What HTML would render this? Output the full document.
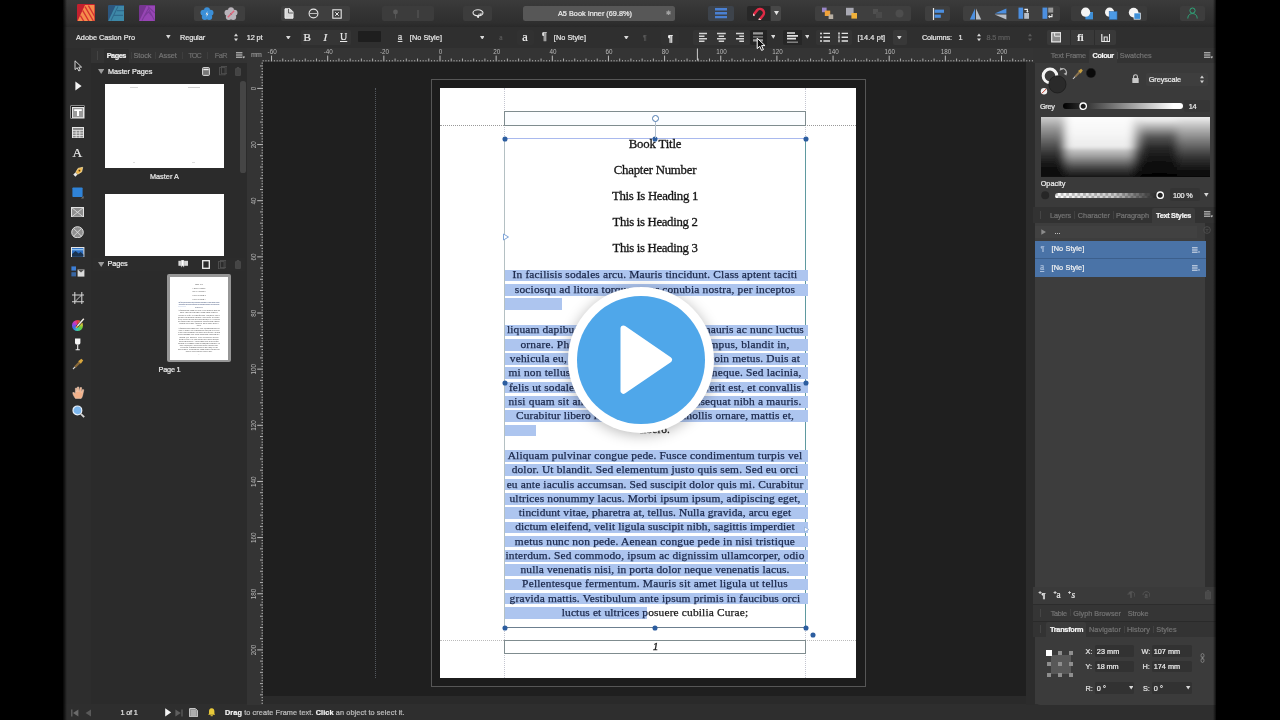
<!DOCTYPE html><html><head><meta charset="utf-8"><title>A5 Book Inner</title><style>
*{box-sizing:border-box;margin:0;padding:0}
html,body{width:1280px;height:720px;overflow:hidden;background:#000}
body{position:relative;font-family:"Liberation Sans",sans-serif;color:#e4e4e4;font-size:8px;-webkit-font-smoothing:antialiased}
.a{position:absolute}
.t{position:absolute;white-space:nowrap;line-height:1;-webkit-text-stroke:.22px currentColor}
.dim{color:#7d7d7d}
.doc{font-family:"Liberation Serif",serif;color:#1a1a1a}
.hl{position:absolute;background:#adc5ef;height:11.7px}
.ln{position:absolute;white-space:nowrap;line-height:1;font-family:"Liberation Serif",serif;font-size:11.2px;text-align:center;left:505px;width:300px;color:#1a2749;-webkit-text-stroke:.25px currentColor}
.hd{position:absolute;white-space:nowrap;line-height:1;font-family:"Liberation Serif",serif;font-size:12.6px;text-align:center;left:505px;width:300px;color:#161616;-webkit-text-stroke:.3px currentColor}
.hand{position:absolute;width:6px;height:6px;border-radius:50%;background:#2c5d9f;transform:scale(.85)}
</style></head><body><div id="root" style="position:absolute;left:0;top:0;width:1280px;height:720px;will-change:transform">
<div class="a" style="left:60.5px;top:0;width:1155.5px;height:720px;background:#2d2d2d"></div>
<div class="a" style="left:60.5px;top:0;width:1155.5px;height:27.5px;background:linear-gradient(#3b3b3b,#343434 40%,#2f2f2f 80%,#272727)"></div>
<div class="a" style="left:60.5px;top:27px;width:1155.5px;height:21px;background:#2f2f2f"></div>
<div class="a" style="left:263.2px;top:61.5px;width:770px;height:635px;background:#1f1f1f"></div>
<div class="a" style="left:247px;top:48px;width:786px;height:14px;background:#333"></div>
<div class="a" style="left:247px;top:62px;width:16px;height:635px;background:#333"></div>
<div class="a" style="left:263px;top:696px;width:770px;height:9px;background:#2a2a2a"></div>
<div class="a" style="left:60.5px;top:704px;width:1155.5px;height:16px;background:#2e2e2e"></div>
<div class="a" style="left:1033px;top:48px;width:183px;height:656px;background:#363636"></div>
<div class="a" style="left:431px;top:79px;width:434.5px;height:608px;border:1.6px solid #565656;background:#1c1c1c"></div>
<div class="a" style="left:440px;top:88px;width:416px;height:590px;background:#fff"></div>
<div class="a" style="left:375px;top:88px;width:0;height:590px;border-left:1px dotted #54585e"></div>
<div class="a" style="left:504px;top:88px;width:0;height:590px;border-left:1px dotted #c4c6d0"></div>
<div class="a" style="left:805px;top:88px;width:0;height:590px;border-left:1px dotted #c4c6d0"></div>
<div class="a" style="left:440px;top:125px;width:416px;height:0;border-top:1px dotted #999"></div>
<div class="a" style="left:440px;top:640px;width:416px;height:0;border-top:1px dotted #bbb"></div>
<div class="a" style="left:504px;top:111px;width:302px;height:15px;border:1px solid #7f8c8f;background:#fbfdff"></div>
<div class="a" style="left:504px;top:640px;width:302px;height:14px;border:1px solid #7f8c8f;background:#fff"></div>
<div class="t doc" style="left:652.8px;top:641.2px;font-size:11.4px;font-style:italic;-webkit-text-stroke:.3px #1a1a1a">1</div>
<div class="a" style="left:504px;top:138px;width:302px;height:490px;border:1px solid #5f9aa0;border-left-color:#b4c0c3;border-top-color:#a9b9ee;border-bottom-color:#6c7f8f"></div>
<div class="hd" style="top:137.8px;font-size:12.8px;letter-spacing:-0.192px">Book Title</div>
<div class="hd" style="top:164.1px;font-size:12.8px;letter-spacing:-0.226px">Chapter Number</div>
<div class="hd" style="top:190.3px;font-size:12.8px;letter-spacing:-0.316px">This Is Heading 1</div>
<div class="hd" style="top:215.9px;font-size:12.8px;letter-spacing:-0.333px">This is Heading 2</div>
<div class="hd" style="top:242.1px;font-size:12.8px;letter-spacing:-0.333px">This is Heading 3</div>
<div class="hl" style="left:505.2px;top:269.6px;width:303.0px"></div>
<div class="hl" style="left:505.2px;top:283.9px;width:303.0px"></div>
<div class="hl" style="left:505.2px;top:298.1px;width:57.3px"></div>
<div class="ln" style="top:269.4px;font-size:11.4px;letter-spacing:0.159px;">In facilisis sodales arcu. Mauris tincidunt. Class aptent taciti</div>
<div class="ln" style="top:283.7px;font-size:11.4px;letter-spacing:0.185px;">sociosqu ad litora torquent per conubia nostra, per inceptos</div>
<div class="ln" style="top:298.0px;font-size:11.4px;letter-spacing:-0.414px;color:#1a1a1a;">hymenaeos.</div>
<div class="hl" style="left:505.2px;top:324.6px;width:303.0px"></div>
<div class="hl" style="left:505.2px;top:338.9px;width:303.0px"></div>
<div class="hl" style="left:505.2px;top:353.1px;width:303.0px"></div>
<div class="hl" style="left:505.2px;top:367.4px;width:303.0px"></div>
<div class="hl" style="left:505.2px;top:381.7px;width:303.0px"></div>
<div class="hl" style="left:505.2px;top:396.0px;width:303.0px"></div>
<div class="hl" style="left:505.2px;top:410.2px;width:303.0px"></div>
<div class="hl" style="left:505.2px;top:424.5px;width:30.8px"></div>
<div class="ln" style="top:324.4px;font-size:11.4px;letter-spacing:0.156px;text-align:left;left:506.9px;">liquam dapibus ipsum vitae sem. Ut eget mauris ac nunc luctus</div>
<div class="ln" style="top:338.7px;font-size:11.4px;letter-spacing:0.201px;">ornare. Phasellus enim augue, rutrum tempus, blandit in,</div>
<div class="ln" style="top:353.0px;font-size:11.4px;letter-spacing:0.173px;">vehicula eu, neque. Sed consequat nunc. Proin metus. Duis at</div>
<div class="ln" style="top:367.3px;font-size:11.4px;letter-spacing:0.196px;">mi non tellus malesuada tincidunt. Cras in neque. Sed lacinia,</div>
<div class="ln" style="top:381.5px;font-size:11.4px;letter-spacing:0.138px;">felis ut sodales pretium, justo sapien hendrerit est, et convallis</div>
<div class="ln" style="top:395.8px;font-size:11.4px;letter-spacing:0.204px;">nisi quam sit amet erat. Suspendisse consequat nibh a mauris.</div>
<div class="ln" style="top:410.1px;font-size:11.4px;letter-spacing:0.114px;">Curabitur libero ligula, faucibus at, mollis ornare, mattis et,</div>
<div class="ln" style="top:424.3px;font-size:11.4px;letter-spacing:0.080px;color:#1a1a1a;">libero.</div>
<div class="hl" style="left:505.2px;top:450.1px;width:303.0px"></div>
<div class="hl" style="left:505.2px;top:464.4px;width:303.0px"></div>
<div class="hl" style="left:505.2px;top:478.6px;width:303.0px"></div>
<div class="hl" style="left:505.2px;top:492.9px;width:303.0px"></div>
<div class="hl" style="left:505.2px;top:507.2px;width:303.0px"></div>
<div class="hl" style="left:505.2px;top:521.5px;width:303.0px"></div>
<div class="hl" style="left:505.2px;top:535.7px;width:303.0px"></div>
<div class="hl" style="left:505.2px;top:550.0px;width:303.0px"></div>
<div class="hl" style="left:505.2px;top:564.3px;width:303.0px"></div>
<div class="hl" style="left:505.2px;top:578.5px;width:303.0px"></div>
<div class="hl" style="left:505.2px;top:592.8px;width:303.0px"></div>
<div class="hl" style="left:505.2px;top:607.1px;width:141.8px"></div>
<div class="ln" style="top:449.9px;font-size:11.4px;letter-spacing:0.184px;">Aliquam pulvinar congue pede. Fusce condimentum turpis vel</div>
<div class="ln" style="top:464.2px;font-size:11.4px;letter-spacing:0.176px;">dolor. Ut blandit. Sed elementum justo quis sem. Sed eu orci</div>
<div class="ln" style="top:478.5px;font-size:11.4px;letter-spacing:0.166px;">eu ante iaculis accumsan. Sed suscipit dolor quis mi. Curabitur</div>
<div class="ln" style="top:492.8px;font-size:11.4px;letter-spacing:0.161px;">ultrices nonummy lacus. Morbi ipsum ipsum, adipiscing eget,</div>
<div class="ln" style="top:507.0px;font-size:11.4px;letter-spacing:0.118px;">tincidunt vitae, pharetra at, tellus. Nulla gravida, arcu eget</div>
<div class="ln" style="top:521.3px;font-size:11.4px;letter-spacing:0.137px;">dictum eleifend, velit ligula suscipit nibh, sagittis imperdiet</div>
<div class="ln" style="top:535.6px;font-size:11.4px;letter-spacing:0.222px;">metus nunc non pede. Aenean congue pede in nisi tristique</div>
<div class="ln" style="top:549.8px;font-size:11.4px;letter-spacing:0.165px;">interdum. Sed commodo, ipsum ac dignissim ullamcorper, odio</div>
<div class="ln" style="top:564.1px;font-size:11.4px;letter-spacing:0.143px;">nulla venenatis nisi, in porta dolor neque venenatis lacus.</div>
<div class="ln" style="top:578.4px;font-size:11.4px;letter-spacing:0.193px;">Pellentesque fermentum. Mauris sit amet ligula ut tellus</div>
<div class="ln" style="top:592.6px;font-size:11.4px;letter-spacing:0.170px;">gravida mattis. Vestibulum ante ipsum primis in faucibus orci</div>
<div class="ln" style="top:606.9px;font-size:11.4px;letter-spacing:0.160px;">luctus et ultrices p<span style="color:#1a1a1a">osuere cubilia Curae;</span></div>
<div class="hand" style="left:501.5px;top:135.5px"></div>
<div class="hand" style="left:652.0px;top:135.5px"></div>
<div class="hand" style="left:802.5px;top:135.5px"></div>
<div class="hand" style="left:501.5px;top:380.0px"></div>
<div class="hand" style="left:802.5px;top:380.0px"></div>
<div class="hand" style="left:501.5px;top:624.5px"></div>
<div class="hand" style="left:652.0px;top:624.5px"></div>
<div class="hand" style="left:802.5px;top:624.5px"></div>
<div class="hand" style="left:809.5px;top:631.5px"></div>
<div class="a" style="left:655px;top:121px;width:0;height:17px;border-left:1px solid #b4c0cc"></div>
<div class="a" style="left:651.5px;top:114.5px;width:7px;height:7px;border-radius:50%;border:1px solid #4d7ab0;background:#fff"></div>
<svg class="a" style="left:501.5px;top:233px" width="8" height="8" viewBox="0 0 8 8"><path d="M1.5 1 L6.5 4 L1.5 7 Z" fill="#fff" stroke="#7fa5d8" stroke-width="1"/></svg>
<svg class="a" style="left:802.6px;top:525.6px" width="7" height="7" viewBox="0 0 7 7"><path d="M1.5 1 L5.8 3.5 L1.5 6 Z" fill="#fff" stroke="#8fb0dc" stroke-width=".8"/></svg>
<div class="a" style="left:567.5px;top:287px;width:146px;height:146px;border-radius:50%;background:#fff;box-shadow:0 2px 14px rgba(0,0,0,.28)"></div>
<div class="a" style="left:577px;top:296px;width:127.5px;height:127.5px;border-radius:50%;background:#4fa7ea"></div>
<svg class="a" style="left:612px;top:318px" width="70" height="84" viewBox="0 0 70 84"><path d="M11.5 10.5 L57 41.7 L11.5 72.9 Z" fill="#fff" stroke="#fff" stroke-width="6" stroke-linejoin="round"/></svg>
<div class="a" style="left:60.5px;top:48.0px;width:30.5px;height:656.0px;background:#2d2d2d;"></div>
<div class="a" style="left:91.0px;top:48.0px;width:157.0px;height:656.0px;background:#2b2b2b;"></div>
<div class="a" style="left:91.0px;top:48.0px;width:156.0px;height:14.5px;background:#333333;"></div>
<div class="a" style="left:96.5px;top:51.0px;width:0.8px;height:9.0px;background:#444;"></div>
<div class="a" style="left:103.8px;top:48.5px;width:25.4px;height:14.0px;background:#2e2e2e;border-radius:2px 2px 0 0"></div>
<div class="t" style="left:106.7px;top:51.82px;font-size:7.30px;color:#f4f4f4;letter-spacing:-0.441px;font-weight:bold;">Pages</div>
<div class="t" style="left:133.5px;top:51.82px;font-size:7.30px;color:#747474;letter-spacing:-0.071px;">Stock</div>
<div class="t" style="left:158.8px;top:51.82px;font-size:7.30px;color:#747474;letter-spacing:-0.071px;">Asset</div>
<div class="t" style="left:188.4px;top:51.82px;font-size:7.30px;color:#6c6c6c;letter-spacing:-0.892px;">TOC</div>
<div class="t" style="left:214.7px;top:51.82px;font-size:7.30px;color:#6c6c6c;letter-spacing:-0.497px;">FaR</div>
<div class="a" style="left:130.8px;top:52.0px;width:0.7px;height:7.0px;background:#3e3e3e;"></div>
<div class="a" style="left:155.2px;top:52.0px;width:0.7px;height:7.0px;background:#3e3e3e;"></div>
<div class="a" style="left:181.5px;top:52.0px;width:0.7px;height:7.0px;background:#3e3e3e;"></div>
<div class="a" style="left:207.0px;top:52.0px;width:0.7px;height:7.0px;background:#3e3e3e;"></div>
<svg class="a" style="left:236.00px;top:52.20px;" width="9" height="7" viewBox="0 0 9 7"><path d="M0 .8 H6.4 M0 3 H6.4 M0 5.2 H6.4" stroke="#d8d8d8" stroke-width="1"/><path d="M6.6 4.6 H9 L7.8 6.4 Z" fill="#d8d8d8"/></svg>
<div class="a" style="left:93.0px;top:64.0px;width:152.0px;height:14.5px;background:#2b2b2b;"></div>
<svg class="a" style="left:97.60px;top:68.60px;" width="6.4" height="5" viewBox="0 0 6.4 5"><path d="M0 0 H6.4 L3.2 5 Z" fill="#9b9b9b"/></svg>
<div class="t" style="left:108.0px;top:68.02px;font-size:7.30px;color:#ececec;letter-spacing:-0.053px;">Master Pages</div>
<svg class="a" style="left:202.00px;top:66.80px;" width="8" height="9" viewBox="0 0 8 9"><rect x=".6" y=".6" width="6.8" height="7.8" rx=".8" fill="#777" stroke="#dcdcdc" stroke-width="1"/><path d="M1.4 2.6 H6.6" stroke="#eee" stroke-width="1.2"/></svg>
<svg class="a" style="left:218.50px;top:66.40px;" width="8.6" height="9.4" viewBox="0 0 8.6 9.4"><rect x=".5" y="1.6" width="5.6" height="7.2" fill="none" stroke="#505050" stroke-width=".9"/><rect x="2.4" y=".5" width="5.6" height="7.2" fill="none" stroke="#505050" stroke-width=".9"/></svg>
<svg class="a" style="left:234.60px;top:66.60px;" width="6" height="9" viewBox="0 0 6 9"><path d="M.6 1.6 H5.4 V8.4 H.6 Z M1.8 .5 H4.2" fill="#444" stroke="#4c4c4c" stroke-width=".9"/></svg>
<div class="a" style="left:105.3px;top:83.5px;width:118.5px;height:84.0px;background:#ffffff;"></div>
<div class="a" style="left:129.5px;top:87.4px;width:8.0px;height:0.8px;background:#d8d8d8;"></div>
<div class="a" style="left:188.0px;top:87.4px;width:12.0px;height:0.8px;background:#d0d0d0;"></div>
<div class="a" style="left:132.5px;top:161.6px;width:2.0px;height:0.8px;background:#ddd;"></div>
<div class="a" style="left:192.0px;top:161.6px;width:3.0px;height:0.8px;background:#ddd;"></div>
<div class="t" style="left:149.9px;top:173.42px;font-size:7.30px;color:#e8e8e8;letter-spacing:0.037px;">Master A</div>
<div class="a" style="left:105.3px;top:193.7px;width:118.5px;height:62.5px;background:#ffffff;"></div>
<div class="a" style="left:240.4px;top:81.0px;width:5.2px;height:91.5px;background:#454545;border-radius:2.6px"></div>
<div class="a" style="left:93.0px;top:257.5px;width:152.0px;height:13.5px;background:#2c2c2c;"></div>
<svg class="a" style="left:97.60px;top:261.60px;" width="6.4" height="5" viewBox="0 0 6.4 5"><path d="M0 0 H6.4 L3.2 5 Z" fill="#9b9b9b"/></svg>
<div class="t" style="left:107.6px;top:260.22px;font-size:7.30px;color:#ececec;letter-spacing:-0.140px;">Pages</div>
<svg class="a" style="left:177.50px;top:260.40px;" width="10.5" height="7.5" viewBox="0 0 10.5 7.5"><rect x=".4" y=".8" width="9.6" height="5" fill="#d8d8d8"/><path d="M3.2 0 V7.2 L4.6 5.8 L6 7.2 V0 Z" fill="#fff" stroke="#888" stroke-width=".4"/></svg>
<svg class="a" style="left:201.60px;top:259.80px;" width="8" height="9" viewBox="0 0 8 9"><rect x=".7" y=".7" width="6.6" height="7.6" fill="#2a2a2a" stroke="#f0f0f0" stroke-width="1.3"/></svg>
<svg class="a" style="left:217.80px;top:259.60px;" width="8.6" height="9.4" viewBox="0 0 8.6 9.4"><rect x=".5" y="1.6" width="5.6" height="7.2" fill="none" stroke="#525252" stroke-width=".9"/><rect x="2.4" y=".5" width="5.6" height="7.2" fill="none" stroke="#525252" stroke-width=".9"/></svg>
<svg class="a" style="left:234.60px;top:260.00px;" width="6" height="9" viewBox="0 0 6 9"><path d="M.6 1.6 H5.4 V8.4 H.6 Z M1.8 .5 H4.2" fill="#454545" stroke="#4c4c4c" stroke-width=".9"/></svg>
<div class="a" style="left:167.0px;top:273.8px;width:64.0px;height:88.4px;background:#969696;border-radius:2px"></div>
<div class="a" style="left:169.6px;top:276.6px;width:58.8px;height:83.4px;background:#ffffff;"></div>
<div class="a" style="left:177.93px;top:282.90px;width:42.15px;text-align:center;white-space:nowrap;overflow:hidden;font-family:'Liberation Serif',serif;font-size:1.91px;line-height:2.05px;height:2.05px;color:#444">Book Title</div>
<div class="a" style="left:177.93px;top:286.60px;width:42.15px;text-align:center;white-space:nowrap;overflow:hidden;font-family:'Liberation Serif',serif;font-size:1.91px;line-height:2.05px;height:2.05px;color:#444">Chapter Number</div>
<div class="a" style="left:177.93px;top:290.30px;width:42.15px;text-align:center;white-space:nowrap;overflow:hidden;font-family:'Liberation Serif',serif;font-size:1.91px;line-height:2.05px;height:2.05px;color:#444">This Is Heading 1</div>
<div class="a" style="left:177.93px;top:294.00px;width:42.15px;text-align:center;white-space:nowrap;overflow:hidden;font-family:'Liberation Serif',serif;font-size:1.91px;line-height:2.05px;height:2.05px;color:#444">This is Heading 2</div>
<div class="a" style="left:177.93px;top:297.70px;width:42.15px;text-align:center;white-space:nowrap;overflow:hidden;font-family:'Liberation Serif',serif;font-size:1.91px;line-height:2.05px;height:2.05px;color:#444">This is Heading 3</div>
<div class="a" style="left:178.0px;top:301.6px;width:42.4px;height:1.7px;background:#e3e9f4;"></div>
<div class="a" style="left:178.0px;top:303.7px;width:42.4px;height:1.7px;background:#e3e9f4;"></div>
<div class="a" style="left:178.0px;top:305.7px;width:8.0px;height:1.7px;background:#e3e9f4;"></div>
<div class="a" style="left:177.93px;top:301.40px;width:42.15px;text-align:center;white-space:nowrap;overflow:hidden;font-family:'Liberation Serif',serif;font-size:1.70px;line-height:2.05px;height:2.05px;color:#4a5570">In facilisis sodales arcu. Mauris tincidunt. Class aptent taciti</div>
<div class="a" style="left:177.93px;top:303.45px;width:42.15px;text-align:center;white-space:nowrap;overflow:hidden;font-family:'Liberation Serif',serif;font-size:1.70px;line-height:2.05px;height:2.05px;color:#4a5570">sociosqu ad litora torquent per conubia nostra, per inceptos</div>
<div class="a" style="left:177.93px;top:305.50px;width:42.15px;text-align:center;white-space:nowrap;overflow:hidden;font-family:'Liberation Serif',serif;font-size:1.70px;line-height:2.05px;height:2.05px;color:#4a5570">hymenaeos.</div>
<div class="a" style="left:177.93px;top:309.40px;width:42.15px;text-align:center;white-space:nowrap;overflow:hidden;font-family:'Liberation Serif',serif;font-size:1.70px;line-height:2.05px;height:2.05px;color:#3a3a3a">Aliquam dapibus ipsum vitae sem. Ut eget mauris ac nunc luctus</div>
<div class="a" style="left:177.93px;top:311.45px;width:42.15px;text-align:center;white-space:nowrap;overflow:hidden;font-family:'Liberation Serif',serif;font-size:1.70px;line-height:2.05px;height:2.05px;color:#3a3a3a">ornare. Phasellus enim augue, rutrum tempus, blandit in,</div>
<div class="a" style="left:177.93px;top:313.50px;width:42.15px;text-align:center;white-space:nowrap;overflow:hidden;font-family:'Liberation Serif',serif;font-size:1.70px;line-height:2.05px;height:2.05px;color:#3a3a3a">vehicula eu, neque. Sed consequat nunc. Proin metus. Duis at</div>
<div class="a" style="left:177.93px;top:315.55px;width:42.15px;text-align:center;white-space:nowrap;overflow:hidden;font-family:'Liberation Serif',serif;font-size:1.70px;line-height:2.05px;height:2.05px;color:#3a3a3a">mi non tellus malesuada tincidunt. Cras in neque. Sed lacinia,</div>
<div class="a" style="left:177.93px;top:317.60px;width:42.15px;text-align:center;white-space:nowrap;overflow:hidden;font-family:'Liberation Serif',serif;font-size:1.70px;line-height:2.05px;height:2.05px;color:#3a3a3a">felis ut sodales pretium, justo sapien hendrerit est, et convallis</div>
<div class="a" style="left:177.93px;top:319.65px;width:42.15px;text-align:center;white-space:nowrap;overflow:hidden;font-family:'Liberation Serif',serif;font-size:1.70px;line-height:2.05px;height:2.05px;color:#3a3a3a">nisi quam sit amet erat. Suspendisse consequat nibh a mauris.</div>
<div class="a" style="left:177.93px;top:321.70px;width:42.15px;text-align:center;white-space:nowrap;overflow:hidden;font-family:'Liberation Serif',serif;font-size:1.70px;line-height:2.05px;height:2.05px;color:#3a3a3a">Curabitur libero ligula, faucibus at, mollis ornare, mattis et,</div>
<div class="a" style="left:177.93px;top:323.75px;width:42.15px;text-align:center;white-space:nowrap;overflow:hidden;font-family:'Liberation Serif',serif;font-size:1.70px;line-height:2.05px;height:2.05px;color:#3a3a3a">libero.</div>
<div class="a" style="left:177.93px;top:327.30px;width:42.15px;text-align:center;white-space:nowrap;overflow:hidden;font-family:'Liberation Serif',serif;font-size:1.70px;line-height:2.05px;height:2.05px;color:#3a3a3a">Aliquam pulvinar congue pede. Fusce condimentum turpis vel</div>
<div class="a" style="left:177.93px;top:329.35px;width:42.15px;text-align:center;white-space:nowrap;overflow:hidden;font-family:'Liberation Serif',serif;font-size:1.70px;line-height:2.05px;height:2.05px;color:#3a3a3a">dolor. Ut blandit. Sed elementum justo quis sem. Sed eu orci</div>
<div class="a" style="left:177.93px;top:331.40px;width:42.15px;text-align:center;white-space:nowrap;overflow:hidden;font-family:'Liberation Serif',serif;font-size:1.70px;line-height:2.05px;height:2.05px;color:#3a3a3a">eu ante iaculis accumsan. Sed suscipit dolor quis mi. Curabitur</div>
<div class="a" style="left:177.93px;top:333.45px;width:42.15px;text-align:center;white-space:nowrap;overflow:hidden;font-family:'Liberation Serif',serif;font-size:1.70px;line-height:2.05px;height:2.05px;color:#3a3a3a">ultrices nonummy lacus. Morbi ipsum ipsum, adipiscing eget,</div>
<div class="a" style="left:177.93px;top:335.50px;width:42.15px;text-align:center;white-space:nowrap;overflow:hidden;font-family:'Liberation Serif',serif;font-size:1.70px;line-height:2.05px;height:2.05px;color:#3a3a3a">tincidunt vitae, pharetra at, tellus. Nulla gravida, arcu eget</div>
<div class="a" style="left:177.93px;top:337.55px;width:42.15px;text-align:center;white-space:nowrap;overflow:hidden;font-family:'Liberation Serif',serif;font-size:1.70px;line-height:2.05px;height:2.05px;color:#3a3a3a">dictum eleifend, velit ligula suscipit nibh, sagittis imperdiet</div>
<div class="a" style="left:177.93px;top:339.60px;width:42.15px;text-align:center;white-space:nowrap;overflow:hidden;font-family:'Liberation Serif',serif;font-size:1.70px;line-height:2.05px;height:2.05px;color:#3a3a3a">metus nunc non pede. Aenean congue pede in nisi tristique</div>
<div class="a" style="left:177.93px;top:341.65px;width:42.15px;text-align:center;white-space:nowrap;overflow:hidden;font-family:'Liberation Serif',serif;font-size:1.70px;line-height:2.05px;height:2.05px;color:#3a3a3a">interdum. Sed commodo, ipsum ac dignissim ullamcorper, odio</div>
<div class="a" style="left:177.93px;top:343.70px;width:42.15px;text-align:center;white-space:nowrap;overflow:hidden;font-family:'Liberation Serif',serif;font-size:1.70px;line-height:2.05px;height:2.05px;color:#3a3a3a">nulla venenatis nisi, in porta dolor neque venenatis lacus.</div>
<div class="a" style="left:177.93px;top:345.75px;width:42.15px;text-align:center;white-space:nowrap;overflow:hidden;font-family:'Liberation Serif',serif;font-size:1.70px;line-height:2.05px;height:2.05px;color:#3a3a3a">Pellentesque fermentum. Mauris sit amet ligula ut tellus</div>
<div class="a" style="left:177.93px;top:347.80px;width:42.15px;text-align:center;white-space:nowrap;overflow:hidden;font-family:'Liberation Serif',serif;font-size:1.70px;line-height:2.05px;height:2.05px;color:#3a3a3a">gravida mattis. Vestibulum ante ipsum primis in faucibus orci</div>
<div class="a" style="left:177.93px;top:349.85px;width:42.15px;text-align:center;white-space:nowrap;overflow:hidden;font-family:'Liberation Serif',serif;font-size:1.70px;line-height:2.05px;height:2.05px;color:#3a3a3a">luctus et ultrices posuere cubilia Curae;</div>
<div class="a" style="left:177.93px;top:353.60px;width:42.15px;text-align:center;white-space:nowrap;overflow:hidden;font-family:'Liberation Serif',serif;font-size:1.64px;line-height:2.05px;height:2.05px;color:#777"><i>1</i></div>
<div class="t" style="left:158.5px;top:365.82px;font-size:7.30px;color:#e8e8e8;letter-spacing:-0.189px;">Page 1</div>
<div class="a" style="left:247.0px;top:48.0px;width:787.5px;height:13.5px;background:#343434;"></div>
<div class="a" style="left:247.0px;top:61.5px;width:16.2px;height:643.0px;background:#343434;"></div>
<svg class="a" style="left:0;top:0" width="1280" height="720" viewBox="0 0 1280 720"><path d="M263.13 60.1V61.4M265.94 60.1V61.4M268.74 60.1V61.4M274.36 60.1V61.4M277.16 60.1V61.4M279.97 60.1V61.4M285.59 60.1V61.4M288.39 60.1V61.4M291.20 60.1V61.4M296.82 60.1V61.4M299.62 60.1V61.4M302.43 60.1V61.4M308.05 60.1V61.4M310.86 60.1V61.4M313.66 60.1V61.4M319.28 60.1V61.4M322.08 60.1V61.4M324.89 60.1V61.4M330.51 60.1V61.4M333.31 60.1V61.4M336.12 60.1V61.4M341.74 60.1V61.4M344.55 60.1V61.4M347.35 60.1V61.4M352.97 60.1V61.4M355.77 60.1V61.4M358.58 60.1V61.4M364.20 60.1V61.4M367.00 60.1V61.4M369.81 60.1V61.4M375.43 60.1V61.4M378.24 60.1V61.4M381.04 60.1V61.4M386.66 60.1V61.4M389.46 60.1V61.4M392.27 60.1V61.4M397.89 60.1V61.4M400.69 60.1V61.4M403.50 60.1V61.4M409.12 60.1V61.4M411.93 60.1V61.4M414.73 60.1V61.4M420.35 60.1V61.4M423.15 60.1V61.4M425.96 60.1V61.4M431.58 60.1V61.4M434.38 60.1V61.4M437.19 60.1V61.4M442.81 60.1V61.4M445.62 60.1V61.4M448.42 60.1V61.4M454.04 60.1V61.4M456.85 60.1V61.4M459.65 60.1V61.4M465.27 60.1V61.4M468.07 60.1V61.4M470.88 60.1V61.4M476.50 60.1V61.4M479.31 60.1V61.4M482.11 60.1V61.4M487.73 60.1V61.4M490.54 60.1V61.4M493.34 60.1V61.4M498.96 60.1V61.4M501.76 60.1V61.4M504.57 60.1V61.4M510.19 60.1V61.4M513.00 60.1V61.4M515.80 60.1V61.4M521.42 60.1V61.4M524.23 60.1V61.4M527.03 60.1V61.4M532.65 60.1V61.4M535.46 60.1V61.4M538.26 60.1V61.4M543.88 60.1V61.4M546.68 60.1V61.4M549.49 60.1V61.4M555.11 60.1V61.4M557.91 60.1V61.4M560.72 60.1V61.4M566.34 60.1V61.4M569.14 60.1V61.4M571.95 60.1V61.4M577.57 60.1V61.4M580.38 60.1V61.4M583.18 60.1V61.4M588.80 60.1V61.4M591.61 60.1V61.4M594.41 60.1V61.4M600.03 60.1V61.4M602.84 60.1V61.4M605.64 60.1V61.4M611.26 60.1V61.4M614.07 60.1V61.4M616.87 60.1V61.4M622.49 60.1V61.4M625.30 60.1V61.4M628.10 60.1V61.4M633.72 60.1V61.4M636.52 60.1V61.4M639.33 60.1V61.4M644.95 60.1V61.4M647.75 60.1V61.4M650.56 60.1V61.4M656.18 60.1V61.4M658.99 60.1V61.4M661.79 60.1V61.4M667.41 60.1V61.4M670.22 60.1V61.4M673.02 60.1V61.4M678.64 60.1V61.4M681.45 60.1V61.4M684.25 60.1V61.4M689.87 60.1V61.4M692.67 60.1V61.4M695.48 60.1V61.4M701.10 60.1V61.4M703.90 60.1V61.4M706.71 60.1V61.4M712.33 60.1V61.4M715.13 60.1V61.4M717.94 60.1V61.4M723.56 60.1V61.4M726.37 60.1V61.4M729.17 60.1V61.4M734.79 60.1V61.4M737.60 60.1V61.4M740.40 60.1V61.4M746.02 60.1V61.4M748.83 60.1V61.4M751.63 60.1V61.4M757.25 60.1V61.4M760.06 60.1V61.4M762.86 60.1V61.4M768.48 60.1V61.4M771.29 60.1V61.4M774.09 60.1V61.4M779.71 60.1V61.4M782.51 60.1V61.4M785.32 60.1V61.4M790.94 60.1V61.4M793.75 60.1V61.4M796.55 60.1V61.4M802.17 60.1V61.4M804.98 60.1V61.4M807.78 60.1V61.4M813.40 60.1V61.4M816.21 60.1V61.4M819.01 60.1V61.4M824.63 60.1V61.4M827.43 60.1V61.4M830.24 60.1V61.4M835.86 60.1V61.4M838.66 60.1V61.4M841.47 60.1V61.4M847.09 60.1V61.4M849.89 60.1V61.4M852.70 60.1V61.4M858.32 60.1V61.4M861.12 60.1V61.4M863.93 60.1V61.4M869.55 60.1V61.4M872.36 60.1V61.4M875.16 60.1V61.4M880.78 60.1V61.4M883.59 60.1V61.4M886.39 60.1V61.4M892.01 60.1V61.4M894.82 60.1V61.4M897.62 60.1V61.4M903.24 60.1V61.4M906.05 60.1V61.4M908.85 60.1V61.4M914.47 60.1V61.4M917.28 60.1V61.4M920.08 60.1V61.4M925.70 60.1V61.4M928.50 60.1V61.4M931.31 60.1V61.4M936.93 60.1V61.4M939.74 60.1V61.4M942.54 60.1V61.4M948.16 60.1V61.4M950.97 60.1V61.4M953.77 60.1V61.4M959.39 60.1V61.4M962.20 60.1V61.4M965.00 60.1V61.4M970.62 60.1V61.4M973.43 60.1V61.4M976.23 60.1V61.4M981.85 60.1V61.4M984.65 60.1V61.4M987.46 60.1V61.4M993.08 60.1V61.4M995.88 60.1V61.4M998.69 60.1V61.4M1004.31 60.1V61.4M1007.12 60.1V61.4M1009.92 60.1V61.4M1015.54 60.1V61.4M1018.35 60.1V61.4M1021.15 60.1V61.4M1026.77 60.1V61.4M1029.58 60.1V61.4M1032.38 60.1V61.4" stroke="#c0c0c0" stroke-width="0.85"/><path d="" stroke="#c8c8c8" stroke-width="0.85"/><path d="M282.78 58.5V61.4M294.01 58.5V61.4M305.24 58.5V61.4M316.47 58.5V61.4M338.93 58.5V61.4M350.16 58.5V61.4M361.39 58.5V61.4M372.62 58.5V61.4M395.08 58.5V61.4M406.31 58.5V61.4M417.54 58.5V61.4M428.77 58.5V61.4M451.23 58.5V61.4M462.46 58.5V61.4M473.69 58.5V61.4M484.92 58.5V61.4M507.38 58.5V61.4M518.61 58.5V61.4M529.84 58.5V61.4M541.07 58.5V61.4M563.53 58.5V61.4M574.76 58.5V61.4M585.99 58.5V61.4M597.22 58.5V61.4M619.68 58.5V61.4M630.91 58.5V61.4M642.14 58.5V61.4M653.37 58.5V61.4M675.83 58.5V61.4M687.06 58.5V61.4M698.29 58.5V61.4M709.52 58.5V61.4M731.98 58.5V61.4M743.21 58.5V61.4M754.44 58.5V61.4M765.67 58.5V61.4M788.13 58.5V61.4M799.36 58.5V61.4M810.59 58.5V61.4M821.82 58.5V61.4M844.28 58.5V61.4M855.51 58.5V61.4M866.74 58.5V61.4M877.97 58.5V61.4M900.43 58.5V61.4M911.66 58.5V61.4M922.89 58.5V61.4M934.12 58.5V61.4M956.58 58.5V61.4M967.81 58.5V61.4M979.04 58.5V61.4M990.27 58.5V61.4M1012.73 58.5V61.4M1023.96 58.5V61.4" stroke="#c0c0c0" stroke-width="0.85"/><path d="M271.55 55.6V61.4M327.70 55.6V61.4M383.85 55.6V61.4M440.00 55.6V61.4M496.15 55.6V61.4M552.30 55.6V61.4M608.45 55.6V61.4M664.60 55.6V61.4M720.75 55.6V61.4M776.90 55.6V61.4M833.05 55.6V61.4M889.20 55.6V61.4M945.35 55.6V61.4M1001.50 55.6V61.4" stroke="#d4d4d4" stroke-width="0.85"/><path d="M261.5 63.13H263M261.5 68.75H263M261.5 71.56H263M261.5 74.36H263M261.5 79.98H263M261.5 82.79H263M261.5 85.59H263M261.5 91.21H263M261.5 94.02H263M261.5 96.82H263M261.5 102.44H263M261.5 105.25H263M261.5 108.05H263M261.5 113.67H263M261.5 116.48H263M261.5 119.28H263M261.5 124.90H263M261.5 127.71H263M261.5 130.51H263M261.5 136.13H263M261.5 138.94H263M261.5 141.74H263M261.5 147.36H263M261.5 150.17H263M261.5 152.97H263M261.5 158.59H263M261.5 161.40H263M261.5 164.20H263M261.5 169.82H263M261.5 172.62H263M261.5 175.43H263M261.5 181.05H263M261.5 183.86H263M261.5 186.66H263M261.5 192.28H263M261.5 195.09H263M261.5 197.89H263M261.5 203.51H263M261.5 206.31H263M261.5 209.12H263M261.5 214.74H263M261.5 217.55H263M261.5 220.35H263M261.5 225.97H263M261.5 228.78H263M261.5 231.58H263M261.5 237.20H263M261.5 240.01H263M261.5 242.81H263M261.5 248.43H263M261.5 251.24H263M261.5 254.04H263M261.5 259.66H263M261.5 262.47H263M261.5 265.27H263M261.5 270.89H263M261.5 273.70H263M261.5 276.50H263M261.5 282.12H263M261.5 284.93H263M261.5 287.73H263M261.5 293.35H263M261.5 296.15H263M261.5 298.96H263M261.5 304.58H263M261.5 307.38H263M261.5 310.19H263M261.5 315.81H263M261.5 318.62H263M261.5 321.42H263M261.5 327.04H263M261.5 329.85H263M261.5 332.65H263M261.5 338.27H263M261.5 341.08H263M261.5 343.88H263M261.5 349.50H263M261.5 352.31H263M261.5 355.11H263M261.5 360.73H263M261.5 363.53H263M261.5 366.34H263M261.5 371.96H263M261.5 374.76H263M261.5 377.57H263M261.5 383.19H263M261.5 386.00H263M261.5 388.80H263M261.5 394.42H263M261.5 397.23H263M261.5 400.03H263M261.5 405.65H263M261.5 408.46H263M261.5 411.26H263M261.5 416.88H263M261.5 419.69H263M261.5 422.49H263M261.5 428.11H263M261.5 430.91H263M261.5 433.72H263M261.5 439.34H263M261.5 442.14H263M261.5 444.95H263M261.5 450.57H263M261.5 453.38H263M261.5 456.18H263M261.5 461.80H263M261.5 464.61H263M261.5 467.41H263M261.5 473.03H263M261.5 475.84H263M261.5 478.64H263M261.5 484.26H263M261.5 487.07H263M261.5 489.87H263M261.5 495.49H263M261.5 498.30H263M261.5 501.10H263M261.5 506.72H263M261.5 509.52H263M261.5 512.33H263M261.5 517.95H263M261.5 520.75H263M261.5 523.56H263M261.5 529.18H263M261.5 531.99H263M261.5 534.79H263M261.5 540.41H263M261.5 543.22H263M261.5 546.02H263M261.5 551.64H263M261.5 554.45H263M261.5 557.25H263M261.5 562.87H263M261.5 565.68H263M261.5 568.48H263M261.5 574.10H263M261.5 576.90H263M261.5 579.71H263M261.5 585.33H263M261.5 588.13H263M261.5 590.94H263M261.5 596.56H263M261.5 599.37H263M261.5 602.17H263M261.5 607.79H263M261.5 610.60H263M261.5 613.40H263M261.5 619.02H263M261.5 621.83H263M261.5 624.63H263M261.5 630.25H263M261.5 633.05H263M261.5 635.86H263M261.5 641.48H263M261.5 644.28H263M261.5 647.09H263M261.5 652.71H263M261.5 655.51H263M261.5 658.32H263M261.5 663.94H263M261.5 666.75H263M261.5 669.55H263M261.5 675.17H263M261.5 677.98H263M261.5 680.78H263M261.5 686.40H263M261.5 689.21H263M261.5 692.01H263M261.5 697.63H263M261.5 700.43H263M261.5 703.24H263" stroke="#c0c0c0" stroke-width="0.85"/><path d="" stroke="#c8c8c8" stroke-width="0.85"/><path d="M260 65.94H263M260 77.17H263M260 99.63H263M260 110.86H263M260 122.09H263M260 133.32H263M260 155.78H263M260 167.01H263M260 178.24H263M260 189.47H263M260 211.93H263M260 223.16H263M260 234.39H263M260 245.62H263M260 268.08H263M260 279.31H263M260 290.54H263M260 301.77H263M260 324.23H263M260 335.46H263M260 346.69H263M260 357.92H263M260 380.38H263M260 391.61H263M260 402.84H263M260 414.07H263M260 436.53H263M260 447.76H263M260 458.99H263M260 470.22H263M260 492.68H263M260 503.91H263M260 515.14H263M260 526.37H263M260 548.83H263M260 560.06H263M260 571.29H263M260 582.52H263M260 604.98H263M260 616.21H263M260 627.44H263M260 638.67H263M260 661.13H263M260 672.36H263M260 683.59H263M260 694.82H263" stroke="#c0c0c0" stroke-width="0.85"/><path d="M257.2 88.40H263M257.2 144.55H263M257.2 200.70H263M257.2 256.85H263M257.2 313.00H263M257.2 369.15H263M257.2 425.30H263M257.2 481.45H263M257.2 537.60H263M257.2 593.75H263M257.2 649.90H263" stroke="#d4d4d4" stroke-width="0.85"/><g font-family="Liberation Sans, sans-serif" font-size="6.3" fill="#b8b8b8"><text x="272.1" y="54.4" text-anchor="middle">-60</text><text x="328.3" y="54.4" text-anchor="middle">-40</text><text x="384.5" y="54.4" text-anchor="middle">-20</text><text x="440.6" y="54.4" text-anchor="middle">0</text><text x="496.8" y="54.4" text-anchor="middle">20</text><text x="552.9" y="54.4" text-anchor="middle">40</text><text x="609.1" y="54.4" text-anchor="middle">60</text><text x="665.2" y="54.4" text-anchor="middle">80</text><text x="721.4" y="54.4" text-anchor="middle">100</text><text x="777.5" y="54.4" text-anchor="middle">120</text><text x="833.6" y="54.4" text-anchor="middle">140</text><text x="889.8" y="54.4" text-anchor="middle">160</text><text x="946.0" y="54.4" text-anchor="middle">180</text><text x="1002.1" y="54.4" text-anchor="middle">200</text><text transform="translate(256.4 88.6) rotate(-90)" text-anchor="middle">0</text><text transform="translate(256.4 144.8) rotate(-90)" text-anchor="middle">20</text><text transform="translate(256.4 200.9) rotate(-90)" text-anchor="middle">40</text><text transform="translate(256.4 257.1) rotate(-90)" text-anchor="middle">60</text><text transform="translate(256.4 313.2) rotate(-90)" text-anchor="middle">80</text><text transform="translate(256.4 369.3) rotate(-90)" text-anchor="middle">100</text><text transform="translate(256.4 425.5) rotate(-90)" text-anchor="middle">120</text><text transform="translate(256.4 481.7) rotate(-90)" text-anchor="middle">140</text><text transform="translate(256.4 537.8) rotate(-90)" text-anchor="middle">160</text><text transform="translate(256.4 594.0) rotate(-90)" text-anchor="middle">180</text><text transform="translate(256.4 650.1) rotate(-90)" text-anchor="middle">200</text></g><path d="M697.4 48.5V60.5" stroke="#e8e8e8" stroke-width="0.85"/></svg>
<div class="t" style="left:251.0px;top:51.07px;font-size:7.00px;color:#8c8c8c;letter-spacing:-0.731px;">mm</div>
<svg class="a" style="left:73.60px;top:59.60px;" width="9" height="12" viewBox="0 0 9 12"><path d="M1 .8 V9.6 L3.2 7.7 L4.8 11 L6.3 10.3 L4.8 7.1 H7.6 Z" fill="#2a2a2a" stroke="#e6e6e6" stroke-width=".9" stroke-linejoin="round"/></svg>
<svg class="a" style="left:74.60px;top:81.20px;" width="7" height="10" viewBox="0 0 7 10"><path d="M.4 .4 V9.6 L6.6 5 Z" fill="#f4f4f4"/></svg>
<div class="a" style="left:70.3px;top:105.0px;width:15.0px;height:14.4px;background:#1f1f1f;border:1px solid #8a8a8a;border-radius:1px"></div>
<svg class="a" style="left:71.80px;top:106.60px;" width="12" height="11.2" viewBox="0 0 12 11.2"><rect x=".5" y=".5" width="11" height="10.2" fill="#9a9a9a" stroke="#e8e8e8" stroke-width="1"/><path d="M2.2 2.2 H9.8 V4 H7 V9 H5 V4 H2.2 Z" fill="#fff"/></svg>
<svg class="a" style="left:71.80px;top:126.80px;" width="12" height="11.4" viewBox="0 0 12 11.4"><rect x=".5" y=".5" width="11" height="10.4" fill="#8a8a8a" stroke="#e6e6e6" stroke-width="1"/><path d="M.5 3.4 H11.5 M.5 6 H11.5 M.5 8.5 H11.5 M4.2 3.4 V11 M7.8 3.4 V11" stroke="#eee" stroke-width=".8"/></svg>
<div class="t" style="left:72.6px;top:146.38px;font-size:13.40px;color:#ececec;font-family:'Liberation Serif',serif;">A</div>
<svg class="a" style="left:71.60px;top:165.00px;" width="13" height="13" viewBox="0 0 13 13"><g transform="rotate(45 6.5 6.5)"><path d="M6.5 .6 L9 4.6 L7.8 9 H5.2 L4 4.6 Z" fill="#f0b64a" stroke="#f7e2a8" stroke-width=".7"/><rect x="5" y="9.4" width="3" height="3" fill="#e8e8e8"/><circle cx="6.5" cy="5.2" r=".9" fill="#5a3a10"/></g></svg>
<svg class="a" style="left:72.40px;top:186.60px;" width="12" height="12" viewBox="0 0 12 12"><rect x=".4" y=".4" width="10.2" height="9.6" rx=".8" fill="#2f83d8"/><path d="M11.6 9 V11.6 H9" fill="#777"/></svg>
<svg class="a" style="left:71.40px;top:206.60px;" width="13" height="10.6" viewBox="0 0 13 10.6"><rect x=".5" y=".5" width="12" height="9.6" fill="#8f8f8f" stroke="#e2e2e2" stroke-width="1"/><path d="M.5 .5 L12.5 10.1 M12.5 .5 L.5 10.1" stroke="#e2e2e2" stroke-width=".8"/></svg>
<svg class="a" style="left:71.40px;top:225.80px;" width="13" height="12.6" viewBox="0 0 13 12.6"><ellipse cx="6.5" cy="6.3" rx="5.8" ry="5.6" fill="#8f8f8f" stroke="#e2e2e2" stroke-width="1"/><path d="M2.4 2.3 L10.6 10.3 M10.6 2.3 L2.4 10.3" stroke="#e2e2e2" stroke-width=".8"/></svg>
<svg class="a" style="left:71.20px;top:246.60px;" width="13.4" height="10.8" viewBox="0 0 13.4 10.8"><rect x=".5" y=".5" width="12.4" height="9.8" fill="#2d6fc2" stroke="#e6e6e6" stroke-width="1"/><path d="M1 7 L4.6 4 L7.6 6.4 L9.6 5 L12.4 7.4 V9.8 H1 Z" fill="#1a3350"/><path d="M1 2.6 H12.4" stroke="#8ec2f2" stroke-width="1.4"/></svg>
<svg class="a" style="left:70.80px;top:266.00px;" width="14" height="12" viewBox="0 0 14 12"><rect x=".4" y=".4" width="4.6" height="4.2" fill="#3d7fd6"/><rect x=".4" y="6.2" width="4.6" height="4.2" fill="#3d7fd6" opacity=".7"/><path d="M6.6 3.4 H13.4 V10.6 H6.6 Z" fill="#dcdcdc"/><path d="M6.6 3.4 L10 6.6 L13.4 3.4" fill="#555"/></svg>
<svg class="a" style="left:71.60px;top:291.80px;" width="12.6" height="12.6" viewBox="0 0 12.6 12.6"><path d="M0 3 H12.6 M0 9.8 H12.6 M2.8 0 V12.6 M9.8 0 V12.6" fill="none" stroke="#d4d4d4" stroke-width="1.05"/><path d="M3 9.6 L9.6 3" stroke="#d4d4d4" stroke-width=".9"/></svg>
<div class="a" style="left:72px;top:319.6px;width:11.4px;height:11.4px;border-radius:50%;background:conic-gradient(from 0deg,#e0364a,#e8c23a 18%,#5fd03c 36%,#38c8b8 52%,#3a6be8 66%,#a03be0 80%,#e03a9a 92%,#e0364a)"></div>
<svg class="a" style="left:71.60px;top:318.40px;" width="13" height="13" viewBox="0 0 13 13"><path d="M4.6 9 L11.6 1.2" stroke="#222" stroke-width="2.6"/><path d="M5.4 8 L11.8 .8" stroke="#f6efe8" stroke-width="1.5"/><path d="M4 9.8 L5.6 8" stroke="#f0a23a" stroke-width="1.6"/></svg>
<svg class="a" style="left:74.40px;top:338.40px;" width="7.4" height="12.6" viewBox="0 0 7.4 12.6"><path d="M1 .5 H6.4 V4.6 Q6.4 6.8 3.7 6.8 Q1 6.8 1 4.6 Z" fill="#f6f6f6"/><path d="M3.7 6.8 V11.2 M1.6 11.8 H5.8" stroke="#f0f0f0" stroke-width="1.1"/></svg>
<svg class="a" style="left:72.00px;top:357.60px;" width="12" height="12" viewBox="0 0 12 12"><path d="M1 11 L3.4 8.6" stroke="#d8d8d8" stroke-width="1.1"/><path d="M3 9 L7.6 4.4" stroke="#8a6a3a" stroke-width="2.2"/><path d="M6.2 3.2 L8.8 5.8 L11.2 2.6 L9.4 .8 Z" fill="#d9a63c"/></svg>
<svg class="a" style="left:71.60px;top:385.60px;" width="13" height="13" viewBox="0 0 13 13"><path d="M3.4 12.4 C1.6 10 .8 8 .8 6.6 L2.2 6.4 L3.4 8.2 V2.2 H4.8 V6 L5.4 1 H6.8 L7 6 L8.2 1.6 H9.6 L9.2 6.6 L10.6 3.4 L11.8 3.8 L10.6 9.4 C10.2 11 9.6 12 9.2 12.4 Z" fill="#f2b18a" stroke="#f7d9c4" stroke-width=".5"/></svg>
<svg class="a" style="left:71.60px;top:404.60px;" width="13" height="13" viewBox="0 0 13 13"><circle cx="5.4" cy="5.4" r="4.4" fill="#7db7ee" stroke="#eaf2fb" stroke-width="1.2"/><path d="M8.8 8.8 L12.2 12.2" stroke="#d6d6d6" stroke-width="1.8"/></svg>
<svg class="a" style="left:71.20px;top:708.60px;" width="8" height="8" viewBox="0 0 8 8"><path d="M.8 .4 V7.6" stroke="#6a6a6a" stroke-width="1.2"/><path d="M7.4 .4 L2 4 L7.4 7.6 Z" fill="#6a6a6a"/></svg>
<svg class="a" style="left:85.00px;top:708.60px;" width="6.4" height="8" viewBox="0 0 6.4 8"><path d="M6 .4 L.6 4 L6 7.6 Z" fill="#5a5a5a"/></svg>
<div class="t" style="left:120.5px;top:709.02px;font-size:7.30px;color:#e2e2e2;letter-spacing:-0.194px;">1 of 1</div>
<svg class="a" style="left:164.60px;top:708.20px;" width="6.4" height="8.6" viewBox="0 0 6.4 8.6"><path d="M.2 .2 L6.2 4.3 L.2 8.4 Z" fill="#f4f4f4"/></svg>
<svg class="a" style="left:175.40px;top:708.60px;" width="8" height="8" viewBox="0 0 8 8"><path d="M.4 .4 L5.8 4 L.4 7.6 Z" fill="#5f5f5f"/><path d="M7 .4 V7.6" stroke="#5f5f5f" stroke-width="1.2"/></svg>
<svg class="a" style="left:188.80px;top:707.80px;" width="9" height="9.4" viewBox="0 0 9 9.4"><path d="M.6 .6 H6.4 L8.4 2.6 V8.8 H.6 Z" fill="#8c8c8c" stroke="#e0e0e0" stroke-width=".9"/><path d="M2 3 H7 M2 5 H7 M2 7 H7" stroke="#e8e8e8" stroke-width=".7"/></svg>
<svg class="a" style="left:207.60px;top:708.20px;" width="7.4" height="8.4" viewBox="0 0 7.4 8.4"><path d="M3.7 .3 C1.6 .3 1 2 1 3.6 V5.6 L.2 6.8 H7.2 L6.4 5.6 V3.6 C6.4 2 5.8 .3 3.7 .3 Z" fill="#e8c93a"/><rect x="2.6" y="7.2" width="2.2" height="1" fill="#e8c93a"/></svg>
<div class="t" style="left:225px;top:709.02px;font-size:7.3px;color:#bdbdbd;letter-spacing:0.1px"><b style="color:#f4f4f4">Drag</b> to create Frame text. <b style="color:#f4f4f4">Click</b> an object to select it.</div>
<svg class="a" style="left:76.60px;top:3.90px;" width="18" height="17.6" viewBox="0 0 18 17.6"><rect width="18" height="17.6" rx="1.2" fill="#c3202e"/><path d="M0.6 17 L8 1 H17.4 V17 Z" fill="#f58c4c"/><path d="M5.6 6.4 L12 17.4 M8 2.6 L16.4 17 M11.4 1.6 L18.6 14 M3.4 11.6 L7 17.6" stroke="#d63030" stroke-width="1.3" fill="none"/></svg>
<svg class="a" style="left:107.90px;top:4.60px;opacity:.92" width="16.6" height="16.6" viewBox="0 0 16.6 16.6"><rect width="16.6" height="16.6" rx="1.2" fill="#2c5a86"/><path d="M0 16.6 L7.4 1 H16.6 V16.6 Z" fill="#3f90b2"/><path d="M3 15.6 L10 1.6 M5.4 10.4 H15 M9 5.6 H16" stroke="#2f6f96" stroke-width="1.1" fill="none"/></svg>
<svg class="a" style="left:138.70px;top:4.60px;opacity:.95" width="16.6" height="16.6" viewBox="0 0 16.6 16.6"><rect width="16.6" height="16.6" rx="1.2" fill="#7a3596"/><path d="M0 16.6 L7.4 1 H16.6 V16.6 Z" fill="#9d47bc"/><path d="M3 15.6 L9.4 3.6 L15.6 15.6 M5.6 11 L9.4 6.8 L13 11 M9 1.6 L16 8" stroke="#7f3a9e" stroke-width="1.1" fill="none"/></svg>
<div class="a" style="left:194.0px;top:5.6px;width:50.7px;height:15.6px;background:#3f3f3f;border-radius:2px"></div>
<svg class="a" style="left:200.40px;top:6.60px;" width="14" height="14" viewBox="0 0 14 14"><g transform="translate(7,7)"><circle r="3" cy="-3.7" fill="#3b8fd8"/><circle r="3" cx="3.5" cy="-1.15" fill="#3b8fd8"/><circle r="3" cx="2.2" cy="3" fill="#3b8fd8"/><circle r="3" cx="-2.2" cy="3" fill="#3b8fd8"/><circle r="3" cx="-3.5" cy="-1.15" fill="#3b8fd8"/><path d="M0.6 -3 L-1.4 0.6 H0 L-0.6 3 L1.4 -0.6 H0 Z" fill="#fff"/></g></svg>
<svg class="a" style="left:224.30px;top:6.60px;" width="14" height="14" viewBox="0 0 14 14"><g transform="translate(7,7)"><circle r="3" cy="-3.7" fill="#b9b3ba"/><circle r="3" cx="3.5" cy="-1.15" fill="#b9b3ba"/><circle r="3" cx="2.2" cy="3" fill="#b9b3ba"/><circle r="3" cx="-2.2" cy="3" fill="#b9b3ba"/><circle r="3" cx="-3.5" cy="-1.15" fill="#b9b3ba"/><path d="M-3.2 3.2 L3.2 -3.2" stroke="#e0637a" stroke-width="1.3"/></g></svg>
<div class="a" style="left:281.0px;top:5.6px;width:69.0px;height:15.6px;background:#3f3f3f;border-radius:2px"></div>
<svg class="a" style="left:284.40px;top:8.10px;" width="10" height="11" viewBox="0 0 10 11"><path d="M1 0.8 H6 L9 3.8 V10.2 H1 Z" fill="#d9d9d9" stroke="#f2f2f2" stroke-width="1"/><path d="M4.5 1 V5 H9" fill="none" stroke="#555" stroke-width=".9"/></svg>
<svg class="a" style="left:307.80px;top:8.10px;" width="11" height="11" viewBox="0 0 11 11"><circle cx="5.5" cy="5.5" r="4.4" fill="none" stroke="#e6e6e6" stroke-width="1.1"/><path d="M1.3 5.5 H9.7" stroke="#bdbdbd" stroke-width="1"/></svg>
<svg class="a" style="left:332.20px;top:8.60px;" width="10" height="10" viewBox="0 0 10 10"><rect x=".8" y=".8" width="8.4" height="8.4" fill="none" stroke="#e6e6e6" stroke-width="1.1"/><path d="M3.2 3.2 L6.8 6.8 M6.8 3.2 L3.2 6.8" stroke="#e6e6e6" stroke-width="1"/></svg>
<div class="a" style="left:382.3px;top:5.6px;width:52.0px;height:15.6px;background:#3c3c3c;border-radius:2px"></div>
<svg class="a" style="left:391.80px;top:8.60px;" width="7" height="10" viewBox="0 0 7 10"><circle cx="3.5" cy="3" r="2.4" fill="#5a5a5a"/><path d="M3.5 5 V9.5" stroke="#555" stroke-width="1"/></svg>
<svg class="a" style="left:415.80px;top:9.60px;" width="4" height="8" viewBox="0 0 4 8"><path d="M2 0 V8" stroke="#525252" stroke-width="1.4"/></svg>
<div class="a" style="left:462.5px;top:5.6px;width:29.5px;height:15.6px;background:#3c3c3c;border-radius:2px"></div>
<svg class="a" style="left:472.30px;top:8.60px;" width="12" height="10" viewBox="0 0 12 10"><ellipse cx="6" cy="3.8" rx="5" ry="3" fill="none" stroke="#e9e9e9" stroke-width="1.1"/><path d="M5 6.5 L6.2 9 L7.2 4.6 M8.4 6.4 L9.2 3.8" stroke="#e9e9e9" stroke-width="1" fill="none"/></svg>
<div class="a" style="left:522.8px;top:5.9px;width:152.6px;height:15.0px;background:#575757;border-radius:2.5px"></div>
<div class="t" style="left:558.0px;top:10.12px;font-size:7.30px;color:#ececec;letter-spacing:0.007px;">A5 Book Inner (69.8%)</div>
<div class="t" style="left:666.2px;top:10.38px;font-size:6.40px;color:#a4a4a4;">&#10033;</div>
<div class="a" style="left:708.3px;top:5.6px;width:25.3px;height:15.6px;background:#3d434b;border-radius:2px"></div>
<svg class="a" style="left:714.60px;top:8.40px;" width="12.8" height="10.4" viewBox="0 0 12.8 10.4"><path d="M0 1.3 H12.8 M0 5.2 H12.8 M0 9.1 H12.8" stroke="#4a80d2" stroke-width="2.4"/></svg>
<div class="a" style="left:747.0px;top:5.6px;width:23.4px;height:15.6px;background:#272727;border-radius:2px 0 0 2px"></div>
<svg class="a" style="left:752.50px;top:7.30px;" width="13" height="13" viewBox="0 0 13 13"><g transform="rotate(38 6.5 6.5)"><path d="M2.6 11.2 V5.6 A3.9 3.9 0 0 1 10.4 5.6 V11.2" fill="none" stroke="#e02a45" stroke-width="2.5"/><path d="M1.35 10.4 H3.85 V12 H1.35 Z M9.15 10.4 H11.65 V12 H9.15 Z" fill="#f3c9cf"/></g></svg>
<div class="a" style="left:771.3px;top:5.6px;width:10.2px;height:15.6px;background:#474747;border-radius:0 2px 2px 0"></div>
<svg class="a" style="left:774.10px;top:11.30px;" width="5" height="4.2" viewBox="0 0 5 4.2"><path d="M0 0H5 L2.5 4.2 Z" fill="#e0e0e0"/></svg>
<div class="a" style="left:815.0px;top:5.6px;width:96.0px;height:15.6px;background:#3f3f3f;border-radius:2px"></div>
<svg class="a" style="left:820.50px;top:7.30px;" width="13" height="13" viewBox="0 0 13 13"><rect x="1" y="0.6" width="4.6" height="4.6" fill="#9a86c8"/><rect x="3.8" y="3.6" width="5.4" height="5.4" fill="#f0a23a"/><rect x="7.6" y="7.4" width="4.6" height="4.6" fill="#b8b0a4"/></svg>
<svg class="a" style="left:845.00px;top:7.30px;" width="13" height="13" viewBox="0 0 13 13"><rect x="1" y="0.8" width="7.6" height="7.6" fill="#a9a9b3"/><rect x="6.4" y="6" width="5.6" height="5.6" fill="#f0b13a"/></svg>
<svg class="a" style="left:871.50px;top:8.00px;" width="11" height="11" viewBox="0 0 11 11"><rect x="1" y="1" width="5" height="5" fill="#505050"/><rect x="4" y="4" width="6" height="6" fill="#4a4a4a"/></svg>
<svg class="a" style="left:894.00px;top:8.00px;" width="11" height="11" viewBox="0 0 11 11"><circle cx="5.5" cy="5.5" r="4" fill="#4d4d4d"/></svg>
<div class="a" style="left:924.7px;top:5.6px;width:25.3px;height:15.6px;background:#3f3f3f;border-radius:2px"></div>
<svg class="a" style="left:931.50px;top:7.60px;" width="13" height="12" viewBox="0 0 13 12"><path d="M1.5 0 V12" stroke="#e8e8e8" stroke-width="1.2"/><rect x="2.6" y="1.6" width="9.4" height="3.2" fill="#4c8fe0"/><rect x="2.6" y="6.6" width="6.2" height="3.2" fill="#4c8fe0"/></svg>
<div class="a" style="left:963.4px;top:5.6px;width:96.6px;height:15.6px;background:#3f3f3f;border-radius:2px"></div>
<svg class="a" style="left:969.00px;top:7.60px;" width="13" height="12" viewBox="0 0 13 12"><path d="M6 0.5 L6 11.5 L0.8 11.5 Z" fill="#4c8fe0"/><path d="M7 0.5 L7 11.5 L12.2 11.5 Z" fill="#b9bec6"/></svg>
<svg class="a" style="left:994.00px;top:7.60px;" width="13" height="12" viewBox="0 0 13 12"><path d="M12.4 5.5 L0.6 5.5 L12.4 0.4 Z" fill="#4c8fe0"/><path d="M12.4 6.5 L0.6 6.5 L12.4 11.6 Z" fill="#b9bec6"/></svg>
<svg class="a" style="left:1017.50px;top:7.40px;" width="12" height="12.4" viewBox="0 0 12 12.4"><rect x="0.5" y="0.6" width="4.6" height="11.2" fill="#4c8fe0"/><rect x="6.2" y="6" width="4.8" height="5.8" fill="#b9bec6"/><path d="M6.4 2.4 H9.4 V5" fill="none" stroke="#f0f0f0" stroke-width="1.1"/><path d="M8 4.2 L9.4 5.8 L10.8 4.2 Z" fill="#f0f0f0"/></svg>
<svg class="a" style="left:1041.80px;top:7.40px;" width="12" height="12.4" viewBox="0 0 12 12.4"><rect x="0.5" y="0.6" width="4.8" height="11.2" fill="#4c8fe0"/><rect x="6.2" y="0.6" width="5" height="5" fill="#9a9a9a"/><path d="M10 7 V9.6 H7.2" fill="none" stroke="#f0f0f0" stroke-width="1.1"/><path d="M7.8 8 L6 9.6 L7.8 11.2 Z" fill="#f0f0f0"/></svg>
<div class="a" style="left:1070.8px;top:5.6px;width:76.6px;height:15.6px;background:#3b3b3b;border-radius:2px"></div>
<svg class="a" style="left:1079.50px;top:7.30px;" width="14" height="13" viewBox="0 0 14 13"><rect x="5.4" y="5" width="7.6" height="7.4" fill="#3f8fd6"/><circle cx="5.6" cy="5.2" r="4.6" fill="#f4f4f4"/></svg>
<svg class="a" style="left:1103.50px;top:7.30px;" width="14" height="13" viewBox="0 0 14 13"><circle cx="5.6" cy="5.2" r="4.6" fill="#f4f4f4"/><rect x="5.2" y="4.6" width="7.8" height="7.8" fill="#4c9ae6" stroke="#2f6fb4" stroke-width=".6"/></svg>
<svg class="a" style="left:1128.00px;top:7.30px;" width="14" height="13" viewBox="0 0 14 13"><circle cx="5.6" cy="5.6" r="4.8" fill="#f4f4f4"/><rect x="6" y="6" width="6.4" height="6.2" fill="#3f8fd6" stroke="#fff" stroke-width=".6"/></svg>
<div class="a" style="left:1179.8px;top:5.6px;width:25.2px;height:15.6px;background:#3d3d3d;border-radius:2px"></div>
<svg class="a" style="left:1187.40px;top:7.40px;" width="11" height="12" viewBox="0 0 11 12"><circle cx="5.5" cy="3.6" r="2.6" fill="none" stroke="#2fa77a" stroke-width="1"/><path d="M0.8 11.5 C1 7.6 3.4 6.6 5.5 6.6 C7.6 6.6 10 7.6 10.2 11.5" fill="none" stroke="#2fa77a" stroke-width="1"/></svg>
<div class="t" style="left:76.0px;top:33.82px;font-size:7.30px;color:#e6e6e6;letter-spacing:-0.015px;">Adobe Caslon Pro</div>
<svg class="a" style="left:166.30px;top:35.30px;" width="4.6" height="3.8" viewBox="0 0 4.6 3.8"><path d="M0 0H4.6 L2.3 3.8 Z" fill="#d8d8d8"/></svg>
<div class="t" style="left:180.0px;top:33.82px;font-size:7.30px;color:#e6e6e6;letter-spacing:-0.080px;">Regular</div>
<svg class="a" style="left:233.50px;top:32.90px;" width="4" height="8.8" viewBox="0 0 4 8.8"><path d="M0 3.2 L2 0.6 L4 3.2 Z M0 5.6 L2 8.2 L4 5.6 Z" fill="#d8d8d8"/></svg>
<div class="t" style="left:246.8px;top:33.82px;font-size:7.30px;color:#e6e6e6;letter-spacing:-0.147px;">12 pt</div>
<svg class="a" style="left:286.00px;top:35.50px;" width="4.6" height="3.8" viewBox="0 0 4.6 3.8"><path d="M0 0H4.6 L2.3 3.8 Z" fill="#d8d8d8"/></svg>
<div class="a" style="left:301.0px;top:30.0px;width:50.0px;height:15.0px;background:#353535;border-radius:2px"></div>
<div class="t" style="left:303.4px;top:31.59px;font-size:11.00px;color:#ececec;font-family:'Liberation Serif',serif;">B</div>
<div class="t" style="left:323.6px;top:31.59px;font-size:11.00px;color:#ececec;font-style:italic;font-family:'Liberation Serif',serif;">I</div>
<div class="t" style="left:340.0px;top:31.83px;font-size:10.00px;color:#ececec;font-family:'Liberation Serif',serif;text-decoration:underline;text-decoration-thickness:.8px;text-underline-offset:1px">U</div>
<div class="a" style="left:358.4px;top:31.4px;width:22.8px;height:11.0px;background:#1e1e1e;border-radius:1px"></div>
<div class="t" style="left:397.8px;top:31.69px;font-size:10.40px;color:#dcdcdc;font-family:'Liberation Serif',serif;text-decoration:underline;text-decoration-thickness:.8px;text-underline-offset:1.2px">a</div>
<div class="t" style="left:409.8px;top:33.82px;font-size:7.30px;color:#e6e6e6;letter-spacing:0.056px;">[No Style]</div>
<svg class="a" style="left:479.90px;top:35.50px;" width="4.6" height="3.8" viewBox="0 0 4.6 3.8"><path d="M0 0H4.6 L2.3 3.8 Z" fill="#d8d8d8"/></svg>
<div class="t" style="left:499.3px;top:33.52px;font-size:7.50px;color:#5a5a5a;font-family:'Liberation Serif',serif;">a</div>
<div class="a" style="left:517.0px;top:30.0px;width:17.0px;height:15.0px;background:#313131;border-radius:2px"></div>
<div class="t" style="left:522.2px;top:30.53px;font-size:12.50px;color:#f2f2f2;font-family:'Liberation Serif',serif;">a</div>
<div class="t" style="left:541.8px;top:32.14px;font-size:10.00px;color:#dcdcdc;">&para;</div>
<div class="t" style="left:553.8px;top:33.82px;font-size:7.30px;color:#e6e6e6;letter-spacing:0.056px;">[No Style]</div>
<svg class="a" style="left:624.20px;top:35.50px;" width="4.6" height="3.8" viewBox="0 0 4.6 3.8"><path d="M0 0H4.6 L2.3 3.8 Z" fill="#d8d8d8"/></svg>
<div class="t" style="left:643.0px;top:33.67px;font-size:7.00px;color:#5c5c5c;">&para;</div>
<div class="a" style="left:661.0px;top:30.0px;width:18.0px;height:15.0px;background:#313131;border-radius:2px"></div>
<div class="t" style="left:667.8px;top:32.64px;font-size:9.40px;color:#f4f4f4;font-weight:bold;">&para;</div>
<div class="a" style="left:693.0px;top:29.8px;width:57.0px;height:15.4px;background:#343434;border-radius:2px"></div>
<svg class="a" style="left:698.60px;top:31.60px;" width="8.8" height="11.2" viewBox="0 0 8.8 11.2"><path d="M0.0 1.6 H8.8 M0.0 4.2 H5.5 M0.0 6.7 H8.8 M0.0 9.2 H5.5 " stroke="#d4d4d4" stroke-width="1.5"/></svg>
<svg class="a" style="left:716.90px;top:31.60px;" width="8.8" height="11.2" viewBox="0 0 8.8 11.2"><path d="M0.0 1.6 H8.8 M1.7 4.2 H7.1 M0.0 6.7 H8.8 M1.7 9.2 H7.1 " stroke="#d4d4d4" stroke-width="1.5"/></svg>
<svg class="a" style="left:735.60px;top:31.60px;" width="8.8" height="11.2" viewBox="0 0 8.8 11.2"><path d="M0.0 1.6 H8.8 M3.3 4.2 H8.8 M0.0 6.7 H8.8 M3.3 9.2 H8.8 " stroke="#d4d4d4" stroke-width="1.5"/></svg>
<div class="a" style="left:749.5px;top:29.8px;width:17.5px;height:15.4px;background:#242424;border-radius:2px 0 0 2px"></div>
<svg class="a" style="left:753.00px;top:32.20px;" width="10" height="10" viewBox="0 0 10 10"><path d="M0 1.4 H10 M0 8.4 H10" stroke="#9a9a9a" stroke-width="2.4"/><path d="M0 4.9 H10" stroke="#777" stroke-width="1.6"/></svg>
<svg class="a" style="left:770.70px;top:35.30px;" width="4.6" height="3.8" viewBox="0 0 4.6 3.8"><path d="M0 0H4.6 L2.3 3.8 Z" fill="#d8d8d8"/></svg>
<div class="a" style="left:782.5px;top:29.8px;width:19.0px;height:15.4px;background:#262626;border-radius:2px 0 0 2px"></div>
<svg class="a" style="left:787.00px;top:31.60px;" width="11" height="11.5" viewBox="0 0 11 11.5"><path d="M0 1 H8 M0 3.8 H11 M0 6.6 H9" stroke="#e2e2e2" stroke-width="1.7"/><path d="M0 10.2 H11" stroke="#8a8a8a" stroke-width="1.4"/></svg>
<svg class="a" style="left:804.70px;top:35.30px;" width="4.6" height="3.8" viewBox="0 0 4.6 3.8"><path d="M0 0H4.6 L2.3 3.8 Z" fill="#d8d8d8"/></svg>
<div class="a" style="left:815.5px;top:29.8px;width:36.0px;height:15.4px;background:#343434;border-radius:2px"></div>
<svg class="a" style="left:819.50px;top:32.00px;" width="10.5" height="10.5" viewBox="0 0 10.5 10.5"><path d="M3.4 1.4 H10.5 M3.4 5.2 H10.5 M3.4 9 H10.5" stroke="#e2e2e2" stroke-width="1.4"/><circle cx="1" cy="1.4" r="1" fill="#e2e2e2"/><circle cx="1" cy="5.2" r="1" fill="#e2e2e2"/><circle cx="1" cy="9" r="1" fill="#e2e2e2"/></svg>
<svg class="a" style="left:837.50px;top:32.00px;" width="10.5" height="10.5" viewBox="0 0 10.5 10.5"><path d="M3.6 1.4 H10.5 M3.6 5.2 H10.5 M3.6 9 H10.5" stroke="#e2e2e2" stroke-width="1.4"/><path d="M1 0 V10.4 M0 1.4 H2 M0 5.2 H2 M0 9 H2" stroke="#cfcfcf" stroke-width=".9"/></svg>
<div class="t" style="left:857.6px;top:33.82px;font-size:7.30px;color:#e6e6e6;letter-spacing:0.147px;">[14.4 pt]</div>
<div class="a" style="left:893.0px;top:29.8px;width:14.0px;height:15.4px;background:#383838;border-radius:2px"></div>
<svg class="a" style="left:897.40px;top:35.50px;" width="4.6" height="3.8" viewBox="0 0 4.6 3.8"><path d="M0 0H4.6 L2.3 3.8 Z" fill="#d8d8d8"/></svg>
<div class="t" style="left:921.9px;top:33.82px;font-size:7.30px;color:#e6e6e6;letter-spacing:-0.091px;">Columns:</div>
<div class="t" style="left:958.6px;top:33.82px;font-size:7.30px;color:#e6e6e6;">1</div>
<svg class="a" style="left:977.30px;top:32.90px;" width="4" height="8.8" viewBox="0 0 4 8.8"><path d="M0 3.2 L2 0.6 L4 3.2 Z M0 5.6 L2 8.2 L4 5.6 Z" fill="#d8d8d8"/></svg>
<div class="t" style="left:986.6px;top:33.82px;font-size:7.30px;color:#5e5e5e;letter-spacing:-0.189px;">8.5 mm</div>
<svg class="a" style="left:1028.00px;top:32.90px;" width="4" height="8.8" viewBox="0 0 4 8.8"><path d="M0 3.2 L2 0.6 L4 3.2 Z M0 5.6 L2 8.2 L4 5.6 Z" fill="#5a5a5a"/></svg>
<div class="a" style="left:1046.9px;top:29.8px;width:69.6px;height:15.6px;background:#393939;border-radius:2px"></div>
<div class="a" style="left:1070.3px;top:29.8px;width:0.8px;height:15.6px;background:#2d2d2d;"></div>
<div class="a" style="left:1094.0px;top:29.8px;width:0.8px;height:15.6px;background:#2d2d2d;"></div>
<svg class="a" style="left:1050.70px;top:32.40px;" width="10.4" height="10.6" viewBox="0 0 10.4 10.6"><rect x=".7" y=".7" width="9" height="9.2" fill="#8e8e8e" stroke="#ececec" stroke-width="1.2"/><path d="M3.6 1 V4.2 H9.6" fill="none" stroke="#ececec" stroke-width="1"/></svg>
<div class="t" style="left:1077.3px;top:32.62px;font-size:10.00px;color:#f0f0f0;font-weight:bold;font-family:'Liberation Serif',serif;">fi</div>
<svg class="a" style="left:1101.00px;top:33.60px;" width="9.4" height="8.4" viewBox="0 0 9.4 8.4"><path d="M.8 0 V7.6 H8.6 V0" fill="none" stroke="#e9e9e9" stroke-width="1.2"/><path d="M3.2 2.4 V7 M6.2 2.4 V7 M3.2 3 H6.2" stroke="#e9e9e9" stroke-width="1.1"/></svg>
<svg class="a" style="left:755.80px;top:37.00px;" width="11" height="15" viewBox="0 0 11 15"><path d="M1.2 1.2 V11.6 L3.7 9.3 L5.6 13.4 L7.4 12.6 L5.6 8.6 H9 Z" fill="#111" stroke="#fff" stroke-width="1" stroke-linejoin="round"/></svg>
<div class="a" style="left:1025.5px;top:61.5px;width:9.5px;height:643.0px;background:#2c2c2c;"></div>
<div class="a" style="left:1034.5px;top:48.0px;width:181.5px;height:656.0px;background:#3a3a3a;"></div>
<div class="a" style="left:1033.0px;top:48.0px;width:183.0px;height:14.5px;background:#333333;"></div>
<div class="a" style="left:1088.5px;top:48.5px;width:28.0px;height:14.0px;background:#3a3a3a;border-radius:2px 2px 0 0"></div>
<div class="t" style="left:1050.8px;top:51.92px;font-size:7.30px;color:#737373;letter-spacing:-0.130px;">Text Frame</div>
<div class="t" style="left:1092.6px;top:51.92px;font-size:7.30px;color:#f6f6f6;letter-spacing:-0.386px;font-weight:bold;">Colour</div>
<div class="t" style="left:1119.8px;top:51.92px;font-size:7.30px;color:#737373;letter-spacing:0.032px;">Swatches</div>
<div class="a" style="left:1116.6px;top:52.0px;width:0.7px;height:7.0px;background:#4a4a4a;"></div>
<svg class="a" style="left:1204.00px;top:51.60px;" width="9" height="7" viewBox="0 0 9 7"><path d="M0 .8 H6.4 M0 3 H6.4 M0 5.2 H6.4" stroke="#d8d8d8" stroke-width="1"/><path d="M6.6 4.6 H9 L7.8 6.4 Z" fill="#d8d8d8"/></svg>
<svg class="a" style="left:1039.00px;top:64.00px;" width="30" height="32" viewBox="0 0 30 32"><circle cx="11" cy="11.9" r="6.8" fill="none" stroke="#f4f4f4" stroke-width="3"/><circle cx="18.4" cy="20.4" r="8.6" fill="#2a2a2a" stroke="#1c1c1c" stroke-width=".8"/><circle cx="5" cy="27.2" r="3.2" fill="#f2f2f2"/><path d="M2.8 29.4 L7.2 25" stroke="#c0392b" stroke-width="1"/><path d="M21.8 5 A3.8 3.8 0 0 1 27 10" fill="none" stroke="#b4b4b4" stroke-width="1.1"/><path d="M20.6 6.8 L21.4 3.6 L24.2 5.2 Z M28.2 8.2 L27.4 11.4 L24.6 9.8 Z" fill="#b4b4b4"/></svg>
<svg class="a" style="left:1072.00px;top:67.00px;" width="12" height="13" viewBox="0 0 12 13"><path d="M1 12 L3.6 9.2" stroke="#cfcfcf" stroke-width="1.1"/><path d="M3.2 9.6 L7.4 5.2" stroke="#8a7350" stroke-width="2"/><path d="M6 4 L8.6 6.6 L10.8 3.4 L9.2 1.8 Z" fill="#c9a040"/></svg>
<svg class="a" style="left:1086.00px;top:68.20px;" width="10" height="10" viewBox="0 0 10 10"><circle cx="5" cy="5" r="4.7" fill="#0a0a0a" stroke="#222" stroke-width=".5"/></svg>
<svg class="a" style="left:1132.40px;top:73.60px;" width="7" height="9.4" viewBox="0 0 7 9.4"><rect x=".3" y="4" width="6.4" height="5.2" rx=".6" fill="#c9c9c9"/><path d="M1.6 4 V2.6 A1.9 1.9 0 0 1 5.4 2.6 V4" fill="none" stroke="#c9c9c9" stroke-width="1.1"/></svg>
<div class="a" style="left:1145.7px;top:73.0px;width:62.5px;height:12.6px;background:#3e3e3e;border-radius:2px"></div>
<div class="t" style="left:1148.7px;top:75.62px;font-size:7.30px;color:#ececec;letter-spacing:-0.062px;">Greyscale</div>
<svg class="a" style="left:1200.20px;top:74.90px;" width="4" height="8.8" viewBox="0 0 4 8.8"><path d="M0 3.2 L2 0.6 L4 3.2 Z M0 5.6 L2 8.2 L4 5.6 Z" fill="#cfcfcf"/></svg>
<div class="t" style="left:1040.0px;top:102.82px;font-size:7.30px;color:#ececec;letter-spacing:-0.330px;">Grey</div>
<div class="a" style="left:1063.0px;top:103.0px;width:120.0px;height:6.4px;background:linear-gradient(90deg,#000,#fff 92%);border-radius:3.2px"></div>
<svg class="a" style="left:1078.60px;top:101.60px;" width="8.4" height="8.4" viewBox="0 0 8.4 8.4"><circle cx="4.2" cy="4.2" r="3.2" fill="#1c1c1c" stroke="#fff" stroke-width="1.3"/></svg>
<div class="a" style="left:1184.0px;top:100.0px;width:26.0px;height:12.0px;background:#363636;border-radius:2px"></div>
<div class="t" style="left:1188.8px;top:102.82px;font-size:7.30px;color:#ececec;letter-spacing:-0.459px;">14</div>
<svg class="a" style="left:1040.80px;top:116.80px;" width="169.4" height="59.8" viewBox="0 0 169.4 59.8"><defs><linearGradient id="ga" x1="0" y1="0" x2="0" y2="1"><stop offset="0" stop-color="#e6e6e6"/><stop offset="0.1" stop-color="#c8c8c8"/><stop offset="0.24" stop-color="#989898"/><stop offset="0.48" stop-color="#525252"/><stop offset="0.6" stop-color="#323232"/><stop offset="0.78" stop-color="#101010"/><stop offset="1" stop-color="#000"/></linearGradient><linearGradient id="gb" x1="0" y1="0" x2="0" y2="1"><stop offset="0" stop-color="#fff"/><stop offset="0.3" stop-color="#f6f6f6"/><stop offset="0.5" stop-color="#ececec"/><stop offset="0.55" stop-color="#c0c0c0"/><stop offset="0.62" stop-color="#a4a4a4"/><stop offset="0.79" stop-color="#444"/><stop offset="0.96" stop-color="#050505"/></linearGradient><linearGradient id="gc" x1="0" y1="0" x2="0" y2="1"><stop offset="0" stop-color="#fff"/><stop offset="0.13" stop-color="#e8e8e8"/><stop offset="0.24" stop-color="#a4a4a4"/><stop offset="0.36" stop-color="#565656"/><stop offset="0.52" stop-color="#262626"/><stop offset="0.75" stop-color="#0c0c0c"/><stop offset="1" stop-color="#000"/></linearGradient><linearGradient id="gd" x1="0" y1="0" x2="0" y2="1"><stop offset="0" stop-color="#fff"/><stop offset="0.1" stop-color="#ececec"/><stop offset="0.24" stop-color="#bcbcbc"/><stop offset="0.48" stop-color="#777"/><stop offset="0.6" stop-color="#464646"/><stop offset="0.78" stop-color="#181818"/><stop offset="0.96" stop-color="#000"/></linearGradient><linearGradient id="ge" x1="0" y1="0" x2="0" y2="1"><stop offset="0" stop-color="#fff"/><stop offset="0.1" stop-color="#eaeaea"/><stop offset="0.24" stop-color="#b4b4b4"/><stop offset="0.4" stop-color="#808080"/><stop offset="0.52" stop-color="#5a5a5a"/><stop offset="0.64" stop-color="#363636"/><stop offset="0.8" stop-color="#141414"/><stop offset="0.96" stop-color="#000"/></linearGradient><filter id="bl" x="-10%" y="-20%" width="120%" height="140%"><feGaussianBlur stdDeviation="4.5 1.6"/></filter><clipPath id="gcl"><rect x="0" y="0" width="169.4" height="59.8"/></clipPath></defs><g clip-path="url(#gcl)"><rect width="169.4" height="59.8" fill="url(#gb)"/><g filter="url(#bl)"><rect x="-14" y="-6" width="38" height="72" fill="url(#ga)"/><rect x="24" y="-6" width="68" height="72" fill="url(#gb)"/><rect x="92" y="-6" width="8" height="72" fill="url(#gd)"/><rect x="100" y="-6" width="36" height="72" fill="url(#gc)"/><rect x="136" y="-6" width="50" height="72" fill="url(#ge)"/></g></g></svg>
<div class="t" style="left:1040.7px;top:180.02px;font-size:7.30px;color:#ececec;letter-spacing:0.008px;">Opacity</div>
<svg class="a" style="left:1041.40px;top:191.20px;" width="8.4" height="8.4" viewBox="0 0 8.4 8.4"><circle cx="4.2" cy="4.2" r="4" fill="#262626"/></svg>
<svg class="a" style="left:1055.00px;top:192.60px;" width="108" height="5.6" viewBox="0 0 108 5.6"><defs><pattern id="ck" width="5.6" height="5.6" patternUnits="userSpaceOnUse"><rect width="5.6" height="5.6" fill="#fff"/><rect width="2.8" height="2.8" fill="#c4c4c4"/><rect x="2.8" y="2.8" width="2.8" height="2.8" fill="#c4c4c4"/></pattern><linearGradient id="of" x1="0" y1="0" x2="1" y2="0"><stop offset="0" stop-color="#262626" stop-opacity="0"/><stop offset=".55" stop-color="#262626" stop-opacity=".25"/><stop offset=".95" stop-color="#262626" stop-opacity="1"/></linearGradient></defs><rect width="108" height="5.6" rx="2.8" fill="url(#ck)"/><rect width="108" height="5.6" rx="2.8" fill="url(#of)"/></svg>
<svg class="a" style="left:1156.20px;top:191.10px;" width="8.4" height="8.4" viewBox="0 0 8.4 8.4"><circle cx="4.2" cy="4.2" r="3.2" fill="#222" stroke="#fff" stroke-width="1.3"/></svg>
<div class="a" style="left:1170.0px;top:188.4px;width:30.0px;height:12.4px;background:#343434;border-radius:2px"></div>
<div class="t" style="left:1173.0px;top:191.82px;font-size:7.30px;color:#ececec;letter-spacing:-0.260px;">100 %</div>
<svg class="a" style="left:1204.40px;top:193.30px;" width="4.6" height="3.8" viewBox="0 0 4.6 3.8"><path d="M0 0H4.6 L2.3 3.8 Z" fill="#d8d8d8"/></svg>
<div class="a" style="left:1033.0px;top:206.7px;width:183.0px;height:16.6px;background:#323232;"></div>
<div class="a" style="left:1152.0px;top:208.0px;width:42.5px;height:15.3px;background:#3c3c3c;border-radius:2px 2px 0 0"></div>
<div class="a" style="left:1040.0px;top:210.5px;width:0.8px;height:8.0px;background:#454545;"></div>
<div class="t" style="left:1050.0px;top:211.62px;font-size:7.30px;color:#737373;letter-spacing:-0.152px;">Layers</div>
<div class="t" style="left:1077.8px;top:211.62px;font-size:7.30px;color:#737373;letter-spacing:0.017px;">Character</div>
<div class="t" style="left:1116.0px;top:211.62px;font-size:7.30px;color:#737373;letter-spacing:-0.132px;">Paragraph</div>
<div class="t" style="left:1156.0px;top:211.62px;font-size:7.30px;color:#f6f6f6;letter-spacing:-0.273px;font-weight:bold;">Text Styles</div>
<div class="a" style="left:1074.0px;top:211.0px;width:0.7px;height:8.0px;background:#414141;"></div>
<div class="a" style="left:1112.8px;top:211.0px;width:0.7px;height:8.0px;background:#414141;"></div>
<svg class="a" style="left:1204.40px;top:211.00px;" width="9" height="7" viewBox="0 0 9 7"><path d="M0 .8 H6.4 M0 3 H6.4 M0 5.2 H6.4" stroke="#d8d8d8" stroke-width="1"/><path d="M6.6 4.6 H9 L7.8 6.4 Z" fill="#d8d8d8"/></svg>
<div class="a" style="left:1035.0px;top:223.3px;width:170.5px;height:363.5px;background:#3d3d3d;"></div>
<div class="a" style="left:1205.0px;top:223.3px;width:11.0px;height:363.5px;background:#2f2f2f;"></div>
<div class="a" style="left:1035.0px;top:225.5px;width:162.0px;height:12.3px;background:#414141;"></div>
<svg class="a" style="left:1041.00px;top:229.00px;" width="5.4" height="6" viewBox="0 0 5.4 6"><path d="M.3 .3 L5.1 3 L.3 5.7 Z" fill="#8c8c8c"/></svg>
<div class="t" style="left:1054.4px;top:227.82px;font-size:7.30px;color:#dcdcdc;">...</div>
<svg class="a" style="left:1202.60px;top:226.40px;" width="8" height="8" viewBox="0 0 8 8"><circle cx="4" cy="4" r="3.4" fill="none" stroke="#4e4e4e" stroke-width=".9"/><path d="M2.4 3.4 H5.6 M4 3.4 V6" stroke="#4e4e4e" stroke-width=".8"/></svg>
<div class="a" style="left:1035.0px;top:241.0px;width:170.5px;height:17.4px;background:#4a73a7;"></div>
<div class="a" style="left:1035.0px;top:259.2px;width:170.5px;height:17.5px;background:#4a73a7;"></div>
<div class="a" style="left:1035.0px;top:258.4px;width:170.5px;height:0.8px;background:#3c5f8c;"></div>
<div class="t" style="left:1040.6px;top:244.57px;font-size:7.60px;color:#9fb6d6;">&para;</div>
<div class="t" style="left:1051.5px;top:245.32px;font-size:7.30px;color:#f2f2f2;letter-spacing:0.126px;">[No Style]</div>
<div class="t" style="left:1040.0px;top:261.96px;font-size:9.60px;color:#aabfdc;font-family:'Liberation Serif',serif;text-decoration:underline;text-decoration-thickness:.7px;text-underline-offset:1px">a</div>
<div class="t" style="left:1051.5px;top:263.82px;font-size:7.30px;color:#f2f2f2;letter-spacing:0.126px;">[No Style]</div>
<svg class="a" style="left:1192.40px;top:246.60px;" width="8" height="7" viewBox="0 0 8 7"><path d="M0 .8 H5.6 M0 3 H5.6 M0 5.2 H5.6" stroke="#dfe6f0" stroke-width="1"/><path d="M6 4.4 H8 L7 6 Z" fill="#dfe6f0"/></svg>
<svg class="a" style="left:1192.40px;top:264.80px;" width="8" height="7" viewBox="0 0 8 7"><path d="M0 .8 H5.6 M0 3 H5.6 M0 5.2 H5.6" stroke="#dfe6f0" stroke-width="1"/><path d="M6 4.4 H8 L7 6 Z" fill="#dfe6f0"/></svg>
<div class="a" style="left:1033.0px;top:586.8px;width:183.0px;height:17.6px;background:#3a3a3a;"></div>
<div class="t" style="left:1041.6px;top:592.34px;font-size:7.40px;color:#e6e6e6;font-weight:bold;">&para;</div>
<div class="t" style="left:1038.4px;top:589.83px;font-size:5.40px;color:#e6e6e6;">+</div>
<div class="t" style="left:1056.4px;top:590.93px;font-size:9.40px;color:#e6e6e6;font-family:'Liberation Serif',serif;">a</div>
<div class="t" style="left:1053.4px;top:589.83px;font-size:5.40px;color:#e6e6e6;">+</div>
<div class="t" style="left:1071.4px;top:590.93px;font-size:9.40px;color:#e6e6e6;font-style:italic;font-family:'Liberation Serif',serif;">s</div>
<div class="t" style="left:1068.0px;top:589.83px;font-size:5.40px;color:#e6e6e6;">+</div>
<div class="t" style="left:1129.0px;top:592.41px;font-size:6.60px;color:#5a5a5a;">&para;</div>
<svg class="a" style="left:1126.60px;top:589.60px;" width="8.6" height="9.6" viewBox="0 0 8.6 9.6"><path d="M1 5 A3.4 3.4 0 1 1 7.4 6.6" fill="none" stroke="#565656" stroke-width=".9"/></svg>
<div class="t" style="left:1144.4px;top:591.80px;font-size:7.40px;color:#5a5a5a;font-family:'Liberation Serif',serif;">a</div>
<svg class="a" style="left:1141.80px;top:589.60px;" width="8.6" height="9.6" viewBox="0 0 8.6 9.6"><path d="M1 5 A3.4 3.4 0 1 1 7.4 6.6" fill="none" stroke="#565656" stroke-width=".9"/></svg>
<svg class="a" style="left:1204.80px;top:590.00px;" width="6" height="9.6" viewBox="0 0 6 9.6"><path d="M.6 1.8 H5.4 V9 H.6 Z M1.8 .5 H4.2" fill="#4a4a4a" stroke="#505050" stroke-width=".9"/></svg>
<div class="a" style="left:1033.0px;top:604.4px;width:183.0px;height:16.4px;background:#353535;"></div>
<div class="a" style="left:1033.0px;top:604.4px;width:183.0px;height:0.8px;background:#2c2c2c;"></div>
<div class="a" style="left:1040.0px;top:609.0px;width:0.8px;height:8.0px;background:#454545;"></div>
<div class="t" style="left:1050.7px;top:610.12px;font-size:7.30px;color:#737373;letter-spacing:-0.290px;">Table</div>
<div class="t" style="left:1073.3px;top:610.12px;font-size:7.30px;color:#737373;letter-spacing:-0.013px;">Glyph Browser</div>
<div class="t" style="left:1127.8px;top:610.12px;font-size:7.30px;color:#737373;letter-spacing:-0.083px;">Stroke</div>
<div class="a" style="left:1070.0px;top:609.4px;width:0.7px;height:7.0px;background:#414141;"></div>
<div class="a" style="left:1033.0px;top:620.8px;width:183.0px;height:16.2px;background:#333333;"></div>
<div class="a" style="left:1033.0px;top:620.8px;width:183.0px;height:0.8px;background:#2a2a2a;"></div>
<div class="a" style="left:1046.0px;top:622.4px;width:40.4px;height:14.6px;background:#3b3b3b;border-radius:2px 2px 0 0"></div>
<div class="a" style="left:1040.0px;top:625.4px;width:0.8px;height:8.0px;background:#454545;"></div>
<div class="t" style="left:1050.0px;top:626.02px;font-size:7.30px;color:#f6f6f6;letter-spacing:-0.266px;font-weight:bold;">Transform</div>
<div class="t" style="left:1088.9px;top:626.02px;font-size:7.30px;color:#737373;letter-spacing:0.095px;">Navigator</div>
<div class="t" style="left:1127.0px;top:626.02px;font-size:7.30px;color:#737373;letter-spacing:0.041px;">History</div>
<div class="t" style="left:1156.2px;top:626.02px;font-size:7.30px;color:#737373;letter-spacing:0.104px;">Styles</div>
<div class="a" style="left:1124.0px;top:626.0px;width:0.7px;height:7.0px;background:#414141;"></div>
<div class="a" style="left:1153.0px;top:626.0px;width:0.7px;height:7.0px;background:#414141;"></div>
<div class="a" style="left:1034.5px;top:637.0px;width:181.5px;height:68.0px;background:#3b3b3b;border-radius:0 0 0 5px"></div>
<div class="a" style="left:1050.6px;top:655.0px;width:20.0px;height:18.6px;background:#585858;"></div>
<div class="a" style="left:1045.5px;top:649.7px;width:6.6px;height:6.4px;background:#ffffff;"></div>
<div class="a" style="left:1047.0px;top:661.9px;width:3.8px;height:3.8px;background:#8e8e8e;"></div>
<div class="a" style="left:1047.0px;top:673.1px;width:3.8px;height:3.8px;background:#8e8e8e;"></div>
<div class="a" style="left:1058.1px;top:651.0px;width:3.8px;height:3.8px;background:#8e8e8e;"></div>
<div class="a" style="left:1058.1px;top:661.9px;width:3.8px;height:3.8px;background:#8e8e8e;"></div>
<div class="a" style="left:1058.1px;top:673.1px;width:3.8px;height:3.8px;background:#8e8e8e;"></div>
<div class="a" style="left:1069.1px;top:651.0px;width:3.8px;height:3.8px;background:#8e8e8e;"></div>
<div class="a" style="left:1069.1px;top:661.9px;width:3.8px;height:3.8px;background:#8e8e8e;"></div>
<div class="a" style="left:1069.1px;top:673.1px;width:3.8px;height:3.8px;background:#8e8e8e;"></div>
<div class="t" style="left:1085.6px;top:647.62px;font-size:7.30px;color:#e4e4e4;">X:</div>
<div class="a" style="left:1095.0px;top:645.4px;width:39.4px;height:11.6px;background:#323232;border-radius:1.5px"></div>
<div class="t" style="left:1096.8px;top:647.62px;font-size:7.30px;color:#ececec;letter-spacing:0.038px;">23 mm</div>
<div class="t" style="left:1141.6px;top:647.62px;font-size:7.30px;color:#e4e4e4;">W:</div>
<div class="a" style="left:1152.0px;top:645.4px;width:40.0px;height:11.6px;background:#323232;border-radius:1.5px"></div>
<div class="t" style="left:1153.8px;top:647.62px;font-size:7.30px;color:#ececec;letter-spacing:-0.028px;">107 mm</div>
<div class="t" style="left:1085.6px;top:662.72px;font-size:7.30px;color:#e4e4e4;">Y:</div>
<div class="a" style="left:1095.0px;top:660.5px;width:39.4px;height:11.6px;background:#323232;border-radius:1.5px"></div>
<div class="t" style="left:1096.8px;top:662.72px;font-size:7.30px;color:#ececec;letter-spacing:-0.142px;">18 mm</div>
<div class="t" style="left:1142.4px;top:662.72px;font-size:7.30px;color:#e4e4e4;">H:</div>
<div class="a" style="left:1152.0px;top:660.5px;width:40.0px;height:11.6px;background:#323232;border-radius:1.5px"></div>
<div class="t" style="left:1153.8px;top:662.72px;font-size:7.30px;color:#ececec;letter-spacing:-0.028px;">174 mm</div>
<div class="t" style="left:1085.6px;top:684.52px;font-size:7.30px;color:#e4e4e4;">R:</div>
<div class="a" style="left:1095.0px;top:682.3px;width:39.4px;height:11.6px;background:#323232;border-radius:1.5px"></div>
<div class="t" style="left:1096.8px;top:684.52px;font-size:7.30px;color:#ececec;letter-spacing:0.065px;">0 &deg;</div>
<svg class="a" style="left:1128.60px;top:686.30px;" width="4.4" height="3.6" viewBox="0 0 4.4 3.6"><path d="M0 0H4.4 L2.2 3.6 Z" fill="#d8d8d8"/></svg>
<div class="t" style="left:1143.0px;top:684.52px;font-size:7.30px;color:#e4e4e4;">S:</div>
<div class="a" style="left:1152.0px;top:682.3px;width:40.0px;height:11.6px;background:#323232;border-radius:1.5px"></div>
<div class="t" style="left:1153.8px;top:684.52px;font-size:7.30px;color:#ececec;letter-spacing:0.065px;">0 &deg;</div>
<svg class="a" style="left:1186.20px;top:686.30px;" width="4.4" height="3.6" viewBox="0 0 4.4 3.6"><path d="M0 0H4.4 L2.2 3.6 Z" fill="#d8d8d8"/></svg>
<svg class="a" style="left:1199.60px;top:652.80px;" width="5" height="10" viewBox="0 0 5 10"><ellipse cx="2.5" cy="2.6" rx="1.5" ry="2.1" fill="none" stroke="#8a8a8a" stroke-width=".8"/><ellipse cx="2.5" cy="7.4" rx="1.5" ry="2.1" fill="none" stroke="#8a8a8a" stroke-width=".8"/><path d="M2.5 3.6 V6.4" stroke="#8a8a8a" stroke-width=".8"/></svg>
<div class="a" style="left:60.5px;top:0;width:6.5px;height:720px;background:linear-gradient(90deg,#000 25%,rgba(0,0,0,.55) 60%,rgba(0,0,0,0))"></div>
<div class="a" style="left:1212.5px;top:0;width:3.5px;height:720px;background:linear-gradient(270deg,rgba(0,0,0,.75),rgba(0,0,0,0))"></div>
</div></body></html>
